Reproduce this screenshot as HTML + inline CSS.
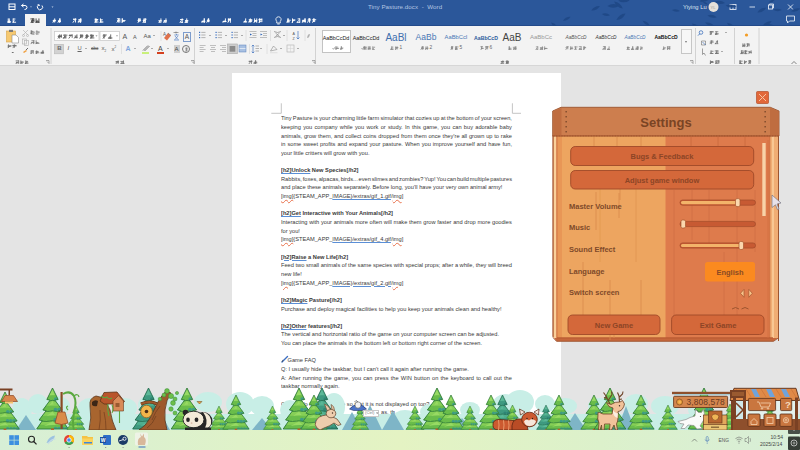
<!DOCTYPE html><html><head><meta charset="utf-8"><style>
*{margin:0;padding:0;box-sizing:border-box}
html,body{width:800px;height:450px;overflow:hidden}
body{position:relative;background:#e4e4e4;font-family:'Liberation Sans', sans-serif;}
.a{position:absolute}
.doc{position:absolute;left:281px;font-size:6.1px;color:#383838;white-space:nowrap;line-height:8.65px;transform:scaleX(0.93);transform-origin:0 0}
.j{width:231px;text-align:justify;text-align-last:justify;white-space:normal}
.b{font-weight:bold}
.w{text-decoration:underline wavy #e8704a;text-decoration-thickness:0.4px}
.u2{text-decoration:underline #5b8fd6}
.u{text-decoration:underline;text-decoration-color:#5b8fd6}
.btn{position:absolute;background:#d5693b;border:1px solid #a54d2b;border-radius:4px;color:#8b4a2a;font-weight:bold;font-size:7px;text-align:center}
.lab{position:absolute;left:569px;font-size:7.2px;color:#7d4a2a;font-weight:bold;white-space:nowrap}

</style></head><body>
<div class="a" style="left:0;top:0;width:800px;height:26px;background:#2b579a;border-bottom:1px solid #234a8a"></div>
<div class="a" style="left:25px;top:14px;width:21px;height:13px;background:#f3f3f3"></div>
<svg class="a" style="left:0;top:0" width="800" height="26" viewBox="0 0 800 26"><g fill="none" stroke="#fff" stroke-width="1"><rect x="9" y="4" width="6" height="5.5"/><line x1="9" y1="6.8" x2="15" y2="6.8"/><line x1="11" y1="9.5" x2="13" y2="9.5"/><path d="M21.5 5.5 L23.5 4 M21.5 5.5 L23.5 7 M21.5 5.5 H25 Q27 5.5 27 7.5 Q27 9.5 24.5 9.5"/><path d="M42 5.5 A2.6 2.6 0 1 1 38.5 5 M38 4 L38.5 5.3 L40 5.2"/></g><path d="M30 6.5 h2 l-1 1z M51.5 6.5 h2 l-1 1.2z" fill="#c9d6ea"/><circle cx="713.5" cy="7" r="5" fill="#e6e1da"/><text x="710.6" y="8.8" font-size="4" fill="#999" font-family="Liberation Sans">YL</text><g fill="none" stroke="#dfe6f2" stroke-width="0.9"><rect x="730" y="4.5" width="6" height="5"/><line x1="733" y1="4.5" x2="733" y2="9.5"/><line x1="749.5" y1="7" x2="755" y2="7"/><rect x="768.5" y="5" width="4" height="4"/><path d="M769.5 5 V4 H773.5 V8 H772.5"/><path d="M788 4.5 L793 9.5 M793 4.5 L788 9.5"/><path d="M786.5 16 H794.5 V21 H789.5 L787.5 23 V21 H786.5Z"/></g><g fill="#1f4886" opacity="0.9"><path transform="translate(601.9 14.1) rotate(8)" d="M0 0 q4.1 -2.5 8.2 0 q-4.1 2.5 -8.2 0z"/><path transform="translate(702.7 1.7) rotate(27)" d="M0 0 q3.0 -1.8 6.1 0 q-3.0 1.8 -6.1 0z"/><path transform="translate(607.4 6.1) rotate(-2)" d="M0 0 q6.0 -3.6 12.0 0 q-6.0 3.6 -12.0 0z"/><path transform="translate(757.5 12.4) rotate(-28)" d="M0 0 q4.9 -3.0 9.8 0 q-4.9 3.0 -9.8 0z"/><path transform="translate(705.1 22.6) rotate(19)" d="M0 0 q4.6 -2.7 9.1 0 q-4.6 2.7 -9.1 0z"/><path transform="translate(714.6 1.7) rotate(7)" d="M0 0 q5.3 -3.2 10.5 0 q-5.3 3.2 -10.5 0z"/><path transform="translate(618.3 0.8) rotate(-2)" d="M0 0 q5.6 -3.4 11.2 0 q-5.6 3.4 -11.2 0z"/><path transform="translate(726.9 22.8) rotate(34)" d="M0 0 q5.1 -3.1 10.3 0 q-5.1 3.1 -10.3 0z"/><path transform="translate(642.7 20.8) rotate(35)" d="M0 0 q4.3 -2.6 8.7 0 q-4.3 2.6 -8.7 0z"/><path transform="translate(768.5 2.5) rotate(-23)" d="M0 0 q3.4 -2.0 6.8 0 q-3.4 2.0 -6.8 0z"/><path transform="translate(791.0 11.3) rotate(-16)" d="M0 0 q4.9 -2.9 9.8 0 q-4.9 2.9 -9.8 0z"/><path transform="translate(671.9 10.0) rotate(7)" d="M0 0 q4.1 -2.4 8.1 0 q-4.1 2.4 -8.1 0z"/><path transform="translate(691.9 23.5) rotate(34)" d="M0 0 q5.0 -3.0 10.1 0 q-5.0 3.0 -10.1 0z"/><path transform="translate(762.7 25.8) rotate(-27)" d="M0 0 q5.0 -3.0 10.0 0 q-5.0 3.0 -10.0 0z"/><path transform="translate(763.8 25.1) rotate(6)" d="M0 0 q5.7 -3.4 11.4 0 q-5.7 3.4 -11.4 0z"/><path transform="translate(725.6 5.5) rotate(6)" d="M0 0 q5.5 -3.3 11.0 0 q-5.5 3.3 -11.0 0z"/><path transform="translate(614.1 1.6) rotate(39)" d="M0 0 q5.6 -3.3 11.1 0 q-5.6 3.3 -11.1 0z"/><path transform="translate(563.0 20.8) rotate(-28)" d="M0 0 q4.2 -2.5 8.5 0 q-4.2 2.5 -8.5 0z"/><path transform="translate(616.4 20.0) rotate(-36)" d="M0 0 q5.6 -3.4 11.2 0 q-5.6 3.4 -11.2 0z"/><path transform="translate(699.8 1.2) rotate(-14)" d="M0 0 q5.2 -3.1 10.3 0 q-5.2 3.1 -10.3 0z"/><path transform="translate(769.0 25.5) rotate(40)" d="M0 0 q4.5 -2.7 9.0 0 q-4.5 2.7 -9.0 0z"/><path transform="translate(620.5 2.0) rotate(-37)" d="M0 0 q4.8 -2.9 9.6 0 q-4.8 2.9 -9.6 0z"/><path transform="translate(591.3 10.6) rotate(-28)" d="M0 0 q4.8 -2.9 9.7 0 q-4.8 2.9 -9.7 0z"/><path transform="translate(551.0 22.6) rotate(37)" d="M0 0 q3.9 -2.4 7.9 0 q-3.9 2.4 -7.9 0z"/><path transform="translate(773.1 9.8) rotate(2)" d="M0 0 q4.4 -2.6 8.8 0 q-4.4 2.6 -8.8 0z"/><path transform="translate(707.4 15.5) rotate(10)" d="M0 0 q4.7 -2.8 9.4 0 q-4.7 2.8 -9.4 0z"/></g></svg>
<div class="a" style="left:368px;top:3px;font-size:6.2px;color:#b4c6e2;white-space:nowrap;letter-spacing:0.05px">Tiny Pasture.docx&nbsp;&nbsp;-&nbsp;&nbsp;Word</div>
<div class="a" style="left:683px;top:3.5px;font-size:5.8px;color:#dbe3f0;white-space:nowrap">Yiying Lu</div>
<svg style="position:absolute;left:7px;top:17.8px;opacity:1.00" width="10.00" height="5.2"><path d="M0.90 4.23H3.40M0.52 3.77H4.07M0.67 4.09H3.45M1.24 0.42V3.99M2.28 0.42V4.76M0.82 4.68L2.29 2.34M6.19 4.23H9.07M6.14 1.01H8.40M6.17 0.42V4.79M5.82 4.68L7.29 2.34" fill="none" stroke="#ffffff" stroke-width="0.94"/></svg>
<svg style="position:absolute;left:51.6px;top:17.8px;opacity:1.00" width="10.00" height="5.2"><path d="M1.08 2.31H4.06M1.26 2.82H3.47M0.64 2.86H3.46M2.69 0.42V4.54M0.82 4.68L2.29 2.34M5.94 3.26H8.74M5.97 2.91H8.72M6.28 3.67H8.65M7.57 0.42V4.81M8.17 0.42V4.20M5.82 4.68L7.29 2.34" fill="none" stroke="#ffffff" stroke-width="0.94"/></svg>
<svg style="position:absolute;left:72.4px;top:17.8px;opacity:1.00" width="10.60" height="5.2"><path d="M0.98 1.21H4.55M1.08 1.33H3.59M3.47 0.42V4.50M0.87 4.68L2.43 2.34M6.19 2.02H9.50M5.82 3.68H8.97M6.65 1.76H8.93M8.41 0.42V4.93M8.95 0.42V4.20M6.17 4.68L7.73 2.34" fill="none" stroke="#ffffff" stroke-width="0.94"/></svg>
<svg style="position:absolute;left:94px;top:17.8px;opacity:1.00" width="10.00" height="5.2"><path d="M0.84 4.01H4.53M1.17 2.07H3.96M0.76 1.57H4.27M2.18 0.42V4.81M1.27 0.42V4.37M0.82 4.68L2.29 2.34M6.43 4.00H9.43M5.92 1.79H8.79M6.61 4.00H8.53M6.47 0.42V4.58M5.82 4.68L7.29 2.34" fill="none" stroke="#ffffff" stroke-width="0.94"/></svg>
<svg style="position:absolute;left:115.6px;top:17.8px;opacity:1.00" width="10.00" height="5.2"><path d="M1.14 2.55H3.67M0.93 0.79H3.81M3.83 0.42V4.62M2.55 0.42V4.54M0.82 4.68L2.29 2.34M6.50 2.44H9.54M6.10 3.26H8.84M6.33 0.42V4.56M6.21 0.42V3.97M5.82 4.68L7.29 2.34" fill="none" stroke="#ffffff" stroke-width="0.94"/></svg>
<svg style="position:absolute;left:137px;top:17.8px;opacity:1.00" width="10.00" height="5.2"><path d="M0.54 2.38H4.10M1.11 1.15H4.02M2.83 0.42V3.97M1.64 0.42V4.29M0.82 4.68L2.29 2.34M6.16 4.26H8.94M6.01 1.20H9.57M5.79 2.53H8.52M8.21 0.42V4.40M8.06 0.42V4.44M5.82 4.68L7.29 2.34" fill="none" stroke="#ffffff" stroke-width="0.94"/></svg>
<svg style="position:absolute;left:158px;top:17.8px;opacity:1.00" width="9.50" height="5.2"><path d="M1.01 4.24H3.35M0.41 2.76H3.81M2.92 0.42V4.17M0.78 4.68L2.18 2.34M5.56 4.09H8.19M5.73 2.75H8.68M6.07 3.01H8.83M7.98 0.42V4.75M5.53 4.68L6.93 2.34" fill="none" stroke="#ffffff" stroke-width="0.94"/></svg>
<svg style="position:absolute;left:179px;top:17.8px;opacity:1.00" width="10.40" height="5.2"><path d="M1.06 1.51H4.43M1.45 4.38H4.09M3.19 0.42V4.89M0.85 4.68L2.38 2.34M6.56 3.72H9.13M5.72 4.33H8.81M6.06 2.49H9.31M7.74 0.42V4.58M6.05 4.68L7.58 2.34" fill="none" stroke="#ffffff" stroke-width="0.94"/></svg>
<svg style="position:absolute;left:200.7px;top:17.8px;opacity:1.00" width="9.70" height="5.2"><path d="M0.53 3.82H3.71M0.63 3.37H4.33M3.25 0.42V4.25M3.28 0.42V4.91M0.80 4.68L2.22 2.34M6.15 2.47H8.19M6.45 1.36H8.12M5.81 2.93H8.89M7.72 0.42V4.26M7.41 0.42V4.04M5.65 4.68L7.07 2.34" fill="none" stroke="#ffffff" stroke-width="0.94"/></svg>
<svg style="position:absolute;left:221.6px;top:17.8px;opacity:1.00" width="9.90" height="5.2"><path d="M1.30 3.69H3.43M0.57 3.51H4.54M3.42 0.42V4.12M0.81 4.68L2.27 2.34M5.97 1.55H9.21M6.03 1.97H9.30M6.27 1.00H9.38M8.38 0.42V4.81M6.35 0.42V4.06M5.76 4.68L7.22 2.34" fill="none" stroke="#ffffff" stroke-width="0.94"/></svg>
<svg style="position:absolute;left:243px;top:17.8px;opacity:1.00" width="20.00" height="5.2"><path d="M1.38 3.96H4.11M0.59 3.60H3.52M2.67 0.42V4.24M0.82 4.68L2.29 2.34M5.53 3.63H9.05M5.75 1.68H9.31M6.11 2.63H9.30M7.33 0.42V4.54M5.82 4.68L7.29 2.34M10.97 3.30H14.01M11.59 2.52H14.22M13.74 0.42V4.83M11.63 0.42V4.37M10.82 4.68L12.29 2.34M15.96 1.22H18.43M15.49 1.66H19.18M16.53 3.63H18.53M16.45 0.42V4.82M18.87 0.42V4.13M15.82 4.68L17.29 2.34" fill="none" stroke="#ffffff" stroke-width="0.94"/></svg>
<svg style="position:absolute;left:286px;top:17.8px;opacity:1.00" width="30.70" height="5.2"><path d="M1.04 2.23H4.69M0.62 3.81H3.97M2.07 0.42V4.10M2.01 0.42V4.65M0.84 4.68L2.34 2.34M6.12 2.01H9.44M6.19 2.18H8.92M6.51 0.42V4.86M5.96 4.68L7.46 2.34M10.78 4.32H13.99M11.65 0.92H14.00M13.75 0.42V4.78M11.07 4.68L12.58 2.34M16.45 2.26H19.43M16.18 2.58H19.13M16.00 3.69H19.92M19.23 0.42V4.56M18.82 0.42V3.99M16.19 4.68L17.69 2.34M21.99 1.02H24.47M21.59 2.01H25.08M23.39 0.42V3.94M23.66 0.42V4.88M21.31 4.68L22.81 2.34M26.23 1.73H30.20M26.68 3.07H29.27M28.14 0.42V4.09M27.68 0.42V3.92M26.42 4.68L27.93 2.34" fill="none" stroke="#ffffff" stroke-width="0.94"/></svg>
<svg style="position:absolute;left:30px;top:17.8px;opacity:1.00" width="10.00" height="5.2"><path d="M0.42 0.91H3.98M1.05 4.34H3.65M1.23 2.41H4.16M2.63 0.42V4.82M3.88 0.42V4.22M0.82 4.68L2.29 2.34M5.83 4.36H9.39M6.20 3.35H8.85M8.92 0.42V4.77M6.07 0.42V4.55M5.82 4.68L7.29 2.34" fill="none" stroke="#444" stroke-width="0.94"/></svg>
<svg class="a" style="left:275px;top:16px" width="7" height="9"><path d="M3.5 0.8 A2.6 2.6 0 0 1 5.3 5.3 V7 H1.7 V5.3 A2.6 2.6 0 0 1 3.5 0.8z M2.3 8 H4.7" fill="none" stroke="#fff" stroke-width="0.8"/></svg>
<div class="a" style="left:0;top:26px;width:800px;height:40px;background:#f3f3f3;border-bottom:1px solid #d6d6d6"></div>
<svg class="a" style="left:0;top:26px" width="800" height="41" viewBox="0 26 800 41"><line x1="51" y1="28" x2="51" y2="64" stroke="#d2d2d2" stroke-width="1"/><line x1="194.5" y1="28" x2="194.5" y2="64" stroke="#d2d2d2" stroke-width="1"/><line x1="315.5" y1="28" x2="315.5" y2="64" stroke="#d2d2d2" stroke-width="1"/><line x1="695.5" y1="28" x2="695.5" y2="64" stroke="#d2d2d2" stroke-width="1"/><line x1="734.5" y1="28" x2="734.5" y2="64" stroke="#d2d2d2" stroke-width="1"/><line x1="759" y1="28" x2="759" y2="64" stroke="#d2d2d2" stroke-width="1"/><line x1="121.5" y1="44" x2="121.5" y2="54" stroke="#dadada" stroke-width="0.8"/><line x1="161" y1="31" x2="161" y2="41" stroke="#dadada" stroke-width="0.8"/><line x1="246" y1="30" x2="246" y2="41" stroke="#dadada" stroke-width="0.8"/><line x1="270.5" y1="30" x2="270.5" y2="41" stroke="#dadada" stroke-width="0.8"/><line x1="287" y1="30" x2="287" y2="41" stroke="#dadada" stroke-width="0.8"/><line x1="305" y1="30" x2="305" y2="41" stroke="#dadada" stroke-width="0.8"/><line x1="249.5" y1="44" x2="249.5" y2="54" stroke="#dadada" stroke-width="0.8"/><line x1="267" y1="44" x2="267" y2="54" stroke="#dadada" stroke-width="0.8"/><path d="M46 60.5 h3 v3 M47 61.5 l2 2" fill="none" stroke="#777" stroke-width="0.6"/><path d="M191 60.5 h3 v3 M192 61.5 l2 2" fill="none" stroke="#777" stroke-width="0.6"/><path d="M312 60.5 h3 v3 M313 61.5 l2 2" fill="none" stroke="#777" stroke-width="0.6"/><path d="M690 60.5 h3 v3 M691 61.5 l2 2" fill="none" stroke="#777" stroke-width="0.6"/><rect x="6.5" y="31" width="9" height="11" fill="#f6c971" stroke="#d9a54a" stroke-width="0.6"/><rect x="9" y="29.8" width="4" height="2.2" fill="#7a7a7a"/><path d="M12 35 h4 l2.5 2.5 v5.5 h-6.5z" fill="#fff" stroke="#8a8a8a" stroke-width="0.6"/><path d="M11.5 52 h2 l-1 1z" fill="#555"/><g fill="none" stroke="#b5b5b5" stroke-width="0.7"><path d="M23 30 L28 35 M28 30 L23 35"/><circle cx="23.5" cy="35.5" r="1"/><circle cx="27.5" cy="35.5" r="1"/><rect x="22.5" y="39" width="4" height="5"/><rect x="24.5" y="40.5" width="4" height="5"/></g><path d="M23 52 l3 -2 l1 1 l-3 2z" fill="#f0a040"/><path d="M26 50 l2 -2" stroke="#444" stroke-width="0.8"/><rect x="54.5" y="31.5" width="44.5" height="9" fill="#fff" stroke="#c6c6c6" stroke-width="0.7"/><rect x="100" y="31.5" width="19.5" height="9" fill="#fff" stroke="#c6c6c6" stroke-width="0.7"/><path d="M95.5 35.5 h2 l-1 1z M116 35.5 h2 l-1 1z" fill="#666"/><rect x="54.5" y="44.3" width="9" height="9.5" fill="#d2d2d2" stroke="#b8b8b8" stroke-width="0.6"/></svg>
<svg style="position:absolute;left:7px;top:44px;opacity:0.73" width="10.00" height="4.5"><path d="M0.47 2.03H4.18M1.04 1.87H4.56M1.27 2.56H3.40M1.49 0.36V3.78M0.82 4.05L2.29 2.02M5.81 1.82H9.58M5.44 1.69H9.45M5.63 1.36H8.76M7.43 0.36V3.83M5.82 4.05L7.29 2.02" fill="none" stroke="#444" stroke-width="0.81"/></svg>
<svg style="position:absolute;left:30px;top:30px;opacity:0.73" width="10.00" height="4.5"><path d="M1.38 1.46H3.45M0.58 3.25H4.08M1.10 0.36V3.65M1.71 0.36V3.90M0.82 4.05L2.29 2.02M6.30 2.75H9.45M5.81 1.90H9.58M6.87 0.36V3.93M5.82 4.05L7.29 2.02" fill="none" stroke="#444" stroke-width="0.81"/></svg>
<svg style="position:absolute;left:30px;top:40px;opacity:0.73" width="10.00" height="4.5"><path d="M1.45 0.81H4.46M1.32 2.65H4.36M3.71 0.36V4.05M0.82 4.05L2.29 2.02M6.14 3.28H9.46M6.27 2.83H8.63M6.15 0.36V3.95M5.82 4.05L7.29 2.02" fill="none" stroke="#444" stroke-width="0.81"/></svg>
<svg style="position:absolute;left:30px;top:49.5px;opacity:0.73" width="15.00" height="4.5"><path d="M0.97 1.86H3.40M1.07 0.73H3.65M1.04 0.36V4.09M3.23 0.36V3.83M0.82 4.05L2.29 2.02M5.48 2.75H9.27M5.49 1.47H8.67M6.71 0.36V3.96M5.82 4.05L7.29 2.02M10.88 2.23H13.94M11.37 2.83H14.12M10.50 2.70H13.53M12.95 0.36V4.00M12.86 0.36V3.50M10.82 4.05L12.29 2.02" fill="none" stroke="#444" stroke-width="0.81"/></svg>
<svg style="position:absolute;left:15px;top:59.5px;opacity:0.73" width="14.00" height="4.5"><path d="M0.69 0.87H3.91M1.17 2.86H3.46M0.92 2.30H3.67M3.69 0.36V3.87M0.77 4.05L2.14 2.02M6.14 3.76H7.80M6.00 2.12H8.92M5.36 2.09H8.03M5.83 0.36V3.46M5.43 4.05L6.80 2.02M9.86 3.68H13.42M10.75 2.28H13.28M10.76 1.40H13.02M10.73 0.36V4.23M10.10 4.05L11.47 2.02" fill="none" stroke="#444" stroke-width="0.81"/></svg>
<svg style="position:absolute;left:115px;top:59.5px;opacity:0.73" width="10.00" height="4.5"><path d="M1.32 1.95H3.86M0.55 1.86H3.76M0.83 1.70H3.84M3.13 0.36V4.19M0.82 4.05L2.29 2.02M5.48 1.47H8.83M5.50 3.42H9.51M6.48 3.06H8.69M8.48 0.36V3.63M5.82 4.05L7.29 2.02" fill="none" stroke="#444" stroke-width="0.81"/></svg>
<svg style="position:absolute;left:248px;top:59.5px;opacity:0.73" width="10.00" height="4.5"><path d="M0.73 1.46H3.98M0.87 1.27H4.54M3.42 0.36V3.94M0.82 4.05L2.29 2.02M5.46 2.94H9.26M6.35 2.10H9.15M7.46 0.36V4.20M7.65 0.36V3.53M5.82 4.05L7.29 2.02" fill="none" stroke="#444" stroke-width="0.81"/></svg>
<svg style="position:absolute;left:500px;top:59.5px;opacity:0.73" width="10.00" height="4.5"><path d="M0.78 1.76H4.27M0.73 3.75H4.17M1.10 1.62H3.84M2.92 0.36V3.44M0.82 4.05L2.29 2.02M5.97 2.41H8.76M5.94 3.07H9.03M5.62 1.44H9.04M6.73 0.36V3.61M7.70 0.36V4.17M5.82 4.05L7.29 2.02" fill="none" stroke="#444" stroke-width="0.81"/></svg>
<svg style="position:absolute;left:709px;top:59.5px;opacity:0.73" width="11.00" height="4.5"><path d="M1.47 1.88H3.97M1.48 1.53H4.36M0.94 2.48H4.63M1.43 0.36V4.18M0.90 4.05L2.52 2.02M6.56 1.93H10.50M7.15 3.35H9.20M6.92 0.78H10.42M9.76 0.36V3.82M6.87 0.36V4.21M6.40 4.05L8.02 2.02" fill="none" stroke="#444" stroke-width="0.81"/></svg>
<svg style="position:absolute;left:739px;top:59.5px;opacity:0.73" width="13.00" height="4.5"><path d="M0.62 3.74H3.01M0.92 1.16H3.64M1.13 3.64H3.60M1.11 0.36V4.07M0.90 0.36V3.49M0.71 4.05L1.98 2.02M5.01 2.71H7.37M5.37 1.47H7.99M5.48 0.36V3.65M5.04 4.05L6.32 2.02M9.26 1.90H12.22M9.34 0.71H12.06M11.20 0.36V4.17M10.77 0.36V3.59M9.38 4.05L10.65 2.02" fill="none" stroke="#444" stroke-width="0.81"/></svg>
<svg style="position:absolute;left:708.5px;top:30.5px;opacity:0.73" width="10.50" height="4.5"><path d="M0.96 0.77H4.37M0.68 0.85H4.68M1.33 0.36V3.58M2.39 0.36V3.71M0.86 4.05L2.40 2.02M6.12 0.78H9.31M5.93 2.83H9.81M6.34 3.00H9.03M7.29 0.36V4.11M6.11 4.05L7.65 2.02" fill="none" stroke="#444" stroke-width="0.81"/></svg>
<svg style="position:absolute;left:708.5px;top:40px;opacity:0.73" width="10.50" height="4.5"><path d="M0.77 2.14H4.68M1.25 1.02H4.31M2.58 0.36V4.19M0.86 4.05L2.40 2.02M5.86 3.66H9.28M6.96 1.35H8.94M8.52 0.36V3.54M6.11 4.05L7.65 2.02" fill="none" stroke="#444" stroke-width="0.81"/></svg>
<svg style="position:absolute;left:708.5px;top:49.5px;opacity:0.73" width="10.50" height="4.5"><path d="M1.59 3.50H4.48M1.65 3.82H3.94M1.66 1.26H4.49M2.04 0.36V4.03M0.86 4.05L2.40 2.02M6.26 3.78H8.90M5.78 0.92H9.31M6.41 3.46H9.76M7.43 0.36V4.11M8.87 0.36V3.76M6.11 4.05L7.65 2.02" fill="none" stroke="#444" stroke-width="0.81"/></svg>
<svg style="position:absolute;left:742px;top:43px;opacity:0.73" width="8.00" height="4.5"><path d="M0.52 2.90H3.22M0.65 2.08H3.42M0.90 0.36V3.74M2.73 0.36V4.07M0.66 4.05L1.83 2.02M4.79 1.86H7.48M4.52 0.87H6.74M5.68 0.36V3.68M7.07 0.36V3.41M4.66 4.05L5.83 2.02" fill="none" stroke="#444" stroke-width="0.81"/></svg>
<svg style="position:absolute;left:740px;top:50px;opacity:0.73" width="12.00" height="4.5"><path d="M0.62 3.59H3.40M1.13 2.55H3.63M1.15 0.88H2.78M3.07 0.36V3.72M1.41 0.36V3.76M0.66 4.05L1.83 2.02M4.82 1.09H6.68M4.63 3.61H7.37M4.56 1.15H7.54M5.68 0.36V4.08M5.01 0.36V3.55M4.66 4.05L5.83 2.02M8.39 1.45H10.71M8.65 2.42H11.66M11.15 0.36V3.61M8.66 4.05L9.83 2.02" fill="none" stroke="#444" stroke-width="0.81"/></svg>
<svg style="position:absolute;left:31px;top:30.5px;opacity:1.00" width="9.00" height="4.5"><path d="M0.84 1.33H4.13M0.56 3.74H3.16M2.57 0.36V3.98M2.91 0.36V4.14M0.74 4.05L2.06 2.02M5.19 3.13H7.82M5.15 1.52H7.80M6.08 0.36V3.60M5.83 0.36V4.17M5.24 4.05L6.56 2.02" fill="none" stroke="#aaa" stroke-width="0.81"/></svg>
<svg style="position:absolute;left:57px;top:33.5px;opacity:0.79" width="38.00" height="5"><path d="M0.98 1.89H4.98M0.75 2.53H4.73M4.28 0.40V3.85M2.63 0.40V4.57M0.89 4.50L2.49 2.25M5.92 3.95H9.46M6.12 1.17H10.39M7.14 2.79H9.56M7.98 0.40V4.01M6.32 4.50L7.91 2.25M12.11 1.12H15.33M11.80 1.51H14.68M15.17 0.40V3.79M11.75 4.50L13.34 2.25M17.84 3.60H20.47M17.57 2.05H20.02M19.94 0.40V4.30M17.18 4.50L18.77 2.25M23.24 2.18H26.25M22.88 1.29H26.23M25.05 0.40V4.16M23.74 0.40V4.06M22.60 4.50L24.20 2.25M28.35 1.84H31.26M28.76 2.21H32.13M30.32 0.40V4.14M29.55 0.40V4.69M28.03 4.50L29.63 2.25M33.59 3.91H37.32M34.21 2.17H36.83M33.03 1.32H36.95M33.97 0.40V4.37M34.87 0.40V4.25M33.46 4.50L35.06 2.25" fill="none" stroke="#333" stroke-width="0.90"/></svg>
<svg style="position:absolute;left:102px;top:33.5px;opacity:0.79" width="11.00" height="5"><path d="M0.66 1.97H3.91M0.97 0.98H4.72M2.11 0.40V4.59M0.90 4.50L2.52 2.25M6.61 4.16H9.25M6.48 3.99H10.43M8.70 0.40V4.61M6.40 4.50L8.02 2.25" fill="none" stroke="#333" stroke-width="0.90"/></svg>
<div class="a" style="left:57.3px;top:45px;font-size:6px;color:#666;white-space:nowrap;font-weight:bold">B</div>
<div class="a" style="left:67.5px;top:45px;font-size:6px;color:#555;white-space:nowrap;"><i>I</i></div>
<div class="a" style="left:77.5px;top:44.8px;font-size:5.8px;color:#666;white-space:nowrap;"><u>U</u></div>
<div class="a" style="left:91px;top:46px;font-size:4.6px;color:#666;white-space:nowrap;text-decoration:line-through">abc</div>
<div class="a" style="left:101.5px;top:45px;font-size:6px;color:#555;white-space:nowrap;">x<sub style="font-size:3px">2</sub></div>
<div class="a" style="left:111.5px;top:45px;font-size:6px;color:#555;white-space:nowrap;">x<sup style="font-size:3px">2</sup></div>
<div class="a" style="left:122.5px;top:32.5px;font-size:7px;color:#555;white-space:nowrap;">A</div>
<div class="a" style="left:133px;top:33.5px;font-size:5.5px;color:#555;white-space:nowrap;">A</div>
<div class="a" style="left:143.5px;top:33px;font-size:6px;color:#555;white-space:nowrap;">Aa</div>
<div class="a" style="left:125.5px;top:45px;font-size:7px;color:#7fa6dd;white-space:nowrap;font-weight:bold">A</div>
<div class="a" style="left:158px;top:44.5px;font-size:7px;color:#444;white-space:nowrap;">A</div>
<div class="a" style="left:157px;top:51.5px;width:7px;height:2px;background:#d4401e"></div>
<div class="a" style="left:142px;top:51.5px;width:7px;height:2px;background:#c9f07a"></div>
<svg class="a" style="left:142px;top:44px" width="8" height="8"><path d="M1 6.5 l5 -5 M2.5 7 l5 -5" stroke="#555" stroke-width="0.8"/></svg>
<div class="a" style="left:173.5px;top:44.5px;font-size:6px;color:#444;white-space:nowrap;background:#cfcfcf;padding:0 1px;line-height:8px">A</div>
<div class="a" style="left:181.5px;top:44.5px;width:8px;height:8px;border:0.7px solid #777;border-radius:50%"><svg width="8" height="8" style="position:absolute;left:0;top:0"><path d="M2 2.2 h3 M3.5 1.5 v3.5 M2 4 h3 M3.5 5 l-1 1" fill="none" stroke="#555" stroke-width="0.5"/></svg></div>
<div class="a" style="left:182.5px;top:31.5px;font-size:6.5px;color:#555;white-space:nowrap;border:0.7px solid #7d9ccc;padding:0 1.2px;line-height:8px">A</div>
<svg class="a" style="left:162px;top:30px" width="20" height="12"><path d="M2 8 l4 -5 l3 2.5 l-4 5z" fill="#e0704a"/><path d="M6 3 l3 2.5" stroke="#666" stroke-width="0.6"/><text x="1" y="6" font-size="4.5" fill="#555" font-family="Liberation Sans">A</text><path d="M11.5 2.5 h5 M14 1.5 v2" stroke="#666" stroke-width="0.6"/><path d="M12.3 5 h4.4 M14.5 4 v1 M13 6 l3 3.5 M16 6 l-3 3.5" fill="none" stroke="#3a6fc0" stroke-width="0.6"/><path d="M12 10 h5" stroke="#3a6fc0" stroke-width="0.6"/></svg>
<div class="a" style="left:11.5px;top:52.0px;width:0;height:0;border-left:1px solid transparent;border-right:1px solid transparent;border-top:1.2px solid #666"></div>
<div class="a" style="left:85px;top:47.5px;width:0;height:0;border-left:1px solid transparent;border-right:1px solid transparent;border-top:1.2px solid #666"></div>
<div class="a" style="left:133.5px;top:47.5px;width:0;height:0;border-left:1px solid transparent;border-right:1px solid transparent;border-top:1.2px solid #666"></div>
<div class="a" style="left:150.5px;top:47.5px;width:0;height:0;border-left:1px solid transparent;border-right:1px solid transparent;border-top:1.2px solid #666"></div>
<div class="a" style="left:167px;top:47.5px;width:0;height:0;border-left:1px solid transparent;border-right:1px solid transparent;border-top:1.2px solid #666"></div>
<div class="a" style="left:153px;top:35.0px;width:0;height:0;border-left:1px solid transparent;border-right:1px solid transparent;border-top:1.2px solid #666"></div>
<div class="a" style="left:208.5px;top:35.0px;width:0;height:0;border-left:1px solid transparent;border-right:1px solid transparent;border-top:1.2px solid #666"></div>
<div class="a" style="left:225px;top:35.0px;width:0;height:0;border-left:1px solid transparent;border-right:1px solid transparent;border-top:1.2px solid #666"></div>
<div class="a" style="left:241px;top:35.0px;width:0;height:0;border-left:1px solid transparent;border-right:1px solid transparent;border-top:1.2px solid #666"></div>
<div class="a" style="left:283px;top:35.0px;width:0;height:0;border-left:1px solid transparent;border-right:1px solid transparent;border-top:1.2px solid #666"></div>
<div class="a" style="left:260px;top:47.5px;width:0;height:0;border-left:1px solid transparent;border-right:1px solid transparent;border-top:1.2px solid #666"></div>
<div class="a" style="left:280px;top:47.5px;width:0;height:0;border-left:1px solid transparent;border-right:1px solid transparent;border-top:1.2px solid #666"></div>
<div class="a" style="left:297px;top:47.5px;width:0;height:0;border-left:1px solid transparent;border-right:1px solid transparent;border-top:1.2px solid #666"></div>
<div class="a" style="left:725px;top:32.0px;width:0;height:0;border-left:1px solid transparent;border-right:1px solid transparent;border-top:1.2px solid #666"></div>
<div class="a" style="left:720.5px;top:51.0px;width:0;height:0;border-left:1px solid transparent;border-right:1px solid transparent;border-top:1.2px solid #666"></div>
<svg class="a" style="left:194px;top:26px" width="125" height="41" viewBox="194 26 125 41"><rect x="199" y="31.8" width="1.2" height="1.2" fill="#3a6fc0"/><line x1="201.3" y1="32.4" x2="205.5" y2="32.4" stroke="#888" stroke-width="0.6"/><rect x="199" y="34.4" width="1.2" height="1.2" fill="#3a6fc0"/><line x1="201.3" y1="35.0" x2="205.5" y2="35.0" stroke="#888" stroke-width="0.6"/><rect x="199" y="37.0" width="1.2" height="1.2" fill="#3a6fc0"/><line x1="201.3" y1="37.6" x2="205.5" y2="37.6" stroke="#888" stroke-width="0.6"/><rect x="215.5" y="31.8" width="1.2" height="1.2" fill="#3a6fc0"/><line x1="217.8" y1="32.4" x2="222.0" y2="32.4" stroke="#888" stroke-width="0.6"/><rect x="215.5" y="34.4" width="1.2" height="1.2" fill="#3a6fc0"/><line x1="217.8" y1="35.0" x2="222.0" y2="35.0" stroke="#888" stroke-width="0.6"/><rect x="215.5" y="37.0" width="1.2" height="1.2" fill="#3a6fc0"/><line x1="217.8" y1="37.6" x2="222.0" y2="37.6" stroke="#888" stroke-width="0.6"/><rect x="231.5" y="31.8" width="1.2" height="1.2" fill="#3a6fc0"/><line x1="233.8" y1="32.4" x2="238.0" y2="32.4" stroke="#888" stroke-width="0.6"/><rect x="231.5" y="34.4" width="1.2" height="1.2" fill="#3a6fc0"/><line x1="233.8" y1="35.0" x2="238.0" y2="35.0" stroke="#888" stroke-width="0.6"/><rect x="231.5" y="37.0" width="1.2" height="1.2" fill="#3a6fc0"/><line x1="233.8" y1="37.6" x2="238.0" y2="37.6" stroke="#888" stroke-width="0.6"/><path d="M249.5 31.5 h7 M252.5 33.5 h4 M252.5 35.5 h4 M249.5 37.5 h7" stroke="#999" stroke-width="0.6"/><path d="M250.0 33.5 l2 1 l-2 1z" fill="#2a63b8"/><path d="M260 31.5 h7 M263 33.5 h4 M263 35.5 h4 M260 37.5 h7" stroke="#999" stroke-width="0.6"/><path d="M260.5 33.5 l2 1 l-2 1z" fill="#2a63b8"/><path d="M274 31.5 q3.5 2 7 0 M274 37.5 q3.5 -2 7 0 M275.5 33 l4 3.5 M279.5 33 l-4 3.5" fill="none" stroke="#777" stroke-width="0.6"/><text x="292.5" y="35" font-size="3.6" fill="#555" font-family="Liberation Sans">A</text><text x="292.5" y="39.5" font-size="3.6" fill="#555" font-family="Liberation Sans">Z</text><path d="M298 31 v8 M296.5 37.5 l1.5 1.5 l1.5 -1.5" fill="none" stroke="#2a63b8" stroke-width="0.6"/><path d="M307.5 36.5 l2 -2.5 M307.5 38 l2 -2.5" stroke="#666" stroke-width="0.6"/><line x1="199.6" y1="45.5" x2="205.6" y2="45.5" stroke="#9a9a9a" stroke-width="0.6"/><line x1="199.6" y1="47.5" x2="203.6" y2="47.5" stroke="#9a9a9a" stroke-width="0.6"/><line x1="199.6" y1="49.5" x2="205.6" y2="49.5" stroke="#9a9a9a" stroke-width="0.6"/><line x1="199.6" y1="51.5" x2="203.6" y2="51.5" stroke="#9a9a9a" stroke-width="0.6"/><line x1="210.0" y1="45.5" x2="216.0" y2="45.5" stroke="#9a9a9a" stroke-width="0.6"/><line x1="211.0" y1="47.5" x2="215.0" y2="47.5" stroke="#9a9a9a" stroke-width="0.6"/><line x1="210.0" y1="49.5" x2="216.0" y2="49.5" stroke="#9a9a9a" stroke-width="0.6"/><line x1="211.0" y1="51.5" x2="215.0" y2="51.5" stroke="#9a9a9a" stroke-width="0.6"/><line x1="220" y1="45.5" x2="226" y2="45.5" stroke="#9a9a9a" stroke-width="0.6"/><line x1="222" y1="47.5" x2="226" y2="47.5" stroke="#9a9a9a" stroke-width="0.6"/><line x1="220" y1="49.5" x2="226" y2="49.5" stroke="#9a9a9a" stroke-width="0.6"/><line x1="222" y1="51.5" x2="226" y2="51.5" stroke="#9a9a9a" stroke-width="0.6"/><rect x="227.6" y="44" width="9.7" height="9.7" fill="#cdcdcd" stroke="#aaa" stroke-width="0.6"/><rect x="229.6" y="46" width="5.7" height="5.7" fill="#8a8a8a"/><rect x="239" y="45" width="7" height="7" fill="#a8c0e2" stroke="#5a80ba" stroke-width="0.5"/><path d="M239.5 48.5 h6" stroke="#fff" stroke-width="0.6"/><path d="M253 45 v8 M251.7 46.3 l1.3 -1.3 l1.3 1.3 M251.7 51.7 l1.3 1.3 l1.3 -1.3" stroke="#2a63b8" stroke-width="0.6" fill="none"/><path d="M255.5 46 h3.5 M255.5 48.5 h3.5 M255.5 51 h3.5" stroke="#888" stroke-width="0.6"/><path d="M270.5 51 l3 -5 l3.5 3.5 z" fill="none" stroke="#888" stroke-width="0.6"/><rect x="270" y="52" width="7.5" height="1.3" fill="#e3e3e3"/><rect x="287" y="45" width="7" height="7" fill="none" stroke="#b0b0b0" stroke-width="0.6"/><path d="M290.5 45 v7 M287 48.5 h7" stroke="#d0d0d0" stroke-width="0.5"/></svg>
<div class="a" style="left:322px;top:29.5px;width:28.5px;height:23.5px;border:1.8px solid #c3c3c3;background:#fff"></div>
<div class="a" style="left:681px;top:29px;width:10.5px;height:25px;border:0.8px solid #c6c6c6;background:#f7f7f7"></div>
<div class="a" style="left:684.5px;top:40.5px;width:0;height:0;border-left:1.5px solid transparent;border-right:1.5px solid transparent;border-top:2px solid #777"></div>
<div class="a" style="left:316px;width:40px;text-align:center;top:34.652px;font-size:5.4px;line-height:6.21px;color:#222;white-space:nowrap;">AaBbCcDd</div>
<div class="a" style="left:346px;width:40px;text-align:center;top:34.652px;font-size:5.4px;line-height:6.21px;color:#222;white-space:nowrap;">AaBbCcDd</div>
<div class="a" style="left:376px;width:40px;text-align:center;top:31.8px;font-size:10px;line-height:11.5px;color:#3f6fae;white-space:nowrap;font-weight:normal">AaBl</div>
<div class="a" style="left:406px;width:40px;text-align:center;top:32.730000000000004px;font-size:8.5px;line-height:9.774999999999999px;color:#4a78b5;white-space:nowrap;">AaBb</div>
<div class="a" style="left:436px;width:40px;text-align:center;top:34.403999999999996px;font-size:5.8px;line-height:6.669999999999999px;color:#4a78b5;white-space:nowrap;">AaBbCcI</div>
<div class="a" style="left:466px;width:40px;text-align:center;top:34.775999999999996px;font-size:5.2px;line-height:5.9799999999999995px;color:#2d5c9c;white-space:nowrap;font-weight:bold">AaBbCcD</div>
<div class="a" style="left:492px;width:40px;text-align:center;top:31.8px;font-size:10px;line-height:11.5px;color:#444;white-space:nowrap;">AaB</div>
<div class="a" style="left:521px;width:40px;text-align:center;top:34.28px;font-size:6px;line-height:6.8999999999999995px;color:#999;white-space:nowrap;">AaBbCc</div>
<div class="a" style="left:556px;width:40px;text-align:center;top:35.024px;font-size:4.8px;line-height:5.52px;color:#555;white-space:nowrap;font-style:italic">AaBbCcD</div>
<div class="a" style="left:586px;width:40px;text-align:center;top:35.024px;font-size:4.8px;line-height:5.52px;color:#333;white-space:nowrap;font-style:italic">AaBbCcD</div>
<div class="a" style="left:615px;width:40px;text-align:center;top:35.024px;font-size:4.8px;line-height:5.52px;color:#4a78b5;white-space:nowrap;font-style:italic">AaBbCcD</div>
<div class="a" style="left:646px;width:40px;text-align:center;top:34.9px;font-size:5px;line-height:5.75px;color:#111;white-space:nowrap;font-weight:bold">AaBbCcD</div>
<svg style="position:absolute;left:334.5px;top:45.8px;opacity:0.67" width="9.00" height="4.3"><path d="M0.58 2.50H3.54M0.41 2.35H4.07M0.77 1.12H3.18M1.04 0.34V3.71M0.74 3.87L2.06 1.94M5.23 2.66H7.95M5.82 2.02H8.39M6.24 0.34V3.44M6.46 0.34V3.54M5.24 3.87L6.56 1.94" fill="none" stroke="#555" stroke-width="0.77"/></svg>
<svg style="position:absolute;left:362.5px;top:45.8px;opacity:0.67" width="13.00" height="4.3"><path d="M0.35 1.18H3.97M0.83 2.05H3.57M1.26 3.11H3.78M1.17 0.34V3.34M1.99 0.34V3.30M0.71 3.87L1.98 1.94M5.40 2.16H7.27M5.69 1.04H7.57M4.77 2.81H8.05M6.89 0.34V3.90M5.29 0.34V3.28M5.04 3.87L6.32 1.94M10.09 1.23H12.10M10.01 3.52H11.74M9.73 0.34V3.53M9.38 3.87L10.65 1.94" fill="none" stroke="#555" stroke-width="0.77"/></svg>
<svg style="position:absolute;left:389.5px;top:45.8px;opacity:0.67" width="9.00" height="4.3"><path d="M1.38 1.12H3.32M0.52 3.10H3.58M0.60 3.41H3.30M1.77 0.34V3.26M0.74 3.87L2.06 1.94M5.58 1.86H7.82M5.29 1.63H8.40M5.73 0.34V3.68M7.11 0.34V3.53M5.24 3.87L6.56 1.94" fill="none" stroke="#555" stroke-width="0.77"/></svg>
<svg style="position:absolute;left:419.5px;top:45.8px;opacity:0.67" width="9.00" height="4.3"><path d="M1.02 2.32H4.01M1.49 0.96H3.72M1.26 1.83H3.31M2.45 0.34V3.53M2.95 0.34V3.61M0.74 3.87L2.06 1.94M5.95 2.50H7.84M5.21 2.20H8.60M7.37 0.34V3.87M6.01 0.34V3.48M5.24 3.87L6.56 1.94" fill="none" stroke="#555" stroke-width="0.77"/></svg>
<svg style="position:absolute;left:449.5px;top:45.8px;opacity:0.67" width="9.00" height="4.3"><path d="M0.77 1.90H3.06M1.05 2.12H3.06M1.00 0.81H3.35M2.34 0.34V3.58M1.72 0.34V3.34M0.74 3.87L2.06 1.94M5.40 2.52H7.66M5.14 3.46H7.68M5.58 0.93H8.49M6.49 0.34V3.45M5.46 0.34V3.78M5.24 3.87L6.56 1.94" fill="none" stroke="#555" stroke-width="0.77"/></svg>
<svg style="position:absolute;left:479.5px;top:45.8px;opacity:0.67" width="9.00" height="4.3"><path d="M1.02 2.44H3.69M0.92 2.20H3.19M0.43 0.65H3.03M1.56 0.34V3.28M0.74 3.87L2.06 1.94M5.48 0.68H8.57M5.09 1.07H8.20M7.58 0.34V3.38M6.25 0.34V3.48M5.24 3.87L6.56 1.94" fill="none" stroke="#555" stroke-width="0.77"/></svg>
<svg style="position:absolute;left:507.5px;top:45.8px;opacity:0.67" width="9.00" height="4.3"><path d="M1.18 3.64H3.55M0.79 2.27H3.50M1.14 0.34V3.79M1.39 0.34V4.08M0.74 3.87L2.06 1.94M4.90 1.34H7.89M5.65 2.90H8.46M5.16 2.79H8.13M7.24 0.34V4.01M8.00 0.34V3.48M5.24 3.87L6.56 1.94" fill="none" stroke="#555" stroke-width="0.77"/></svg>
<svg style="position:absolute;left:534.5px;top:45.8px;opacity:0.67" width="13.00" height="4.3"><path d="M0.90 0.90H3.08M1.27 3.37H3.12M2.79 0.34V3.51M0.71 3.87L1.98 1.94M4.94 1.63H8.22M5.44 2.54H7.95M5.19 3.59H8.14M7.41 0.34V3.60M5.04 3.87L6.32 1.94M9.35 2.36H11.79M9.10 2.52H12.56M9.64 0.34V3.32M9.38 3.87L10.65 1.94" fill="none" stroke="#555" stroke-width="0.77"/></svg>
<svg style="position:absolute;left:565.0px;top:45.8px;opacity:0.67" width="22.00" height="4.3"><path d="M0.51 1.68H2.97M1.12 0.77H3.64M2.81 0.34V3.28M0.72 3.87L2.02 1.94M5.81 1.24H7.93M5.73 2.64H8.18M5.18 2.79H7.61M5.60 0.34V3.25M5.12 3.87L6.42 1.94M9.85 3.13H12.06M9.26 0.95H12.58M10.47 0.34V3.51M9.52 3.87L10.82 1.94M13.84 0.71H16.45M13.96 2.80H16.49M14.11 3.55H17.08M16.15 0.34V3.25M13.92 3.87L15.22 1.94M18.73 1.69H21.14M18.91 1.30H20.64M18.95 0.34V3.23M19.03 0.34V3.88M18.32 3.87L19.62 1.94" fill="none" stroke="#555" stroke-width="0.77"/></svg>
<svg style="position:absolute;left:601.5px;top:45.8px;opacity:0.67" width="9.00" height="4.3"><path d="M0.92 0.66H3.56M0.57 3.04H3.57M3.46 0.34V3.67M2.46 0.34V3.36M0.74 3.87L2.06 1.94M5.12 3.47H7.69M5.73 3.47H8.06M7.09 0.34V3.53M5.24 3.87L6.56 1.94" fill="none" stroke="#555" stroke-width="0.77"/></svg>
<svg style="position:absolute;left:626.0px;top:45.8px;opacity:0.67" width="18.00" height="4.3"><path d="M1.37 3.44H3.85M1.09 1.92H3.43M0.85 1.56H3.62M1.93 0.34V3.99M0.74 3.87L2.06 1.94M5.00 3.49H8.18M5.55 2.72H7.54M6.81 0.34V3.97M6.62 0.34V3.70M5.24 3.87L6.56 1.94M9.86 1.16H12.88M9.50 2.39H12.53M9.63 3.31H12.22M11.92 0.34V3.94M11.56 0.34V3.85M9.74 3.87L11.06 1.94M14.54 2.82H16.90M14.94 1.36H16.80M14.86 0.34V3.79M14.24 3.87L15.56 1.94" fill="none" stroke="#555" stroke-width="0.77"/></svg>
<svg style="position:absolute;left:661.5px;top:45.8px;opacity:0.67" width="9.00" height="4.3"><path d="M1.48 1.80H3.91M0.85 2.85H3.23M1.67 0.34V3.99M0.74 3.87L2.06 1.94M5.31 0.75H8.40M5.43 2.73H8.22M5.02 2.04H8.19M5.44 0.34V3.43M7.68 0.34V3.83M5.24 3.87L6.56 1.94" fill="none" stroke="#555" stroke-width="0.77"/></svg>
<div class="a" style="left:399.5px;top:45.2px;font-size:4.8px;color:#666;white-space:nowrap;">1</div>
<div class="a" style="left:429.5px;top:45.2px;font-size:4.8px;color:#666;white-space:nowrap;">2</div>
<div class="a" style="left:459.5px;top:45.2px;font-size:4.8px;color:#666;white-space:nowrap;">5</div>
<div class="a" style="left:489.5px;top:45.2px;font-size:4.8px;color:#666;white-space:nowrap;">6</div>
<svg class="a" style="left:332px;top:46px" width="4" height="4"><path d="M0.5 2 l1 1.3 l2 -2.6" fill="none" stroke="#777" stroke-width="0.6"/></svg>
<svg class="a" style="left:361px;top:46px" width="4" height="4"><path d="M0.5 2 l1 1.3 l2 -2.6" fill="none" stroke="#777" stroke-width="0.6"/></svg>
<svg class="a" style="left:695px;top:26px" width="65" height="41" viewBox="695 26 65 41"><circle cx="701" cy="32.5" r="1.8" fill="none" stroke="#2a63b8" stroke-width="0.7"/><path d="M699.8 33.8 l-1.8 1.8" stroke="#2a63b8" stroke-width="0.8"/><path d="M701.5 41 h4 v4 h-4z" fill="none" stroke="#555" stroke-width="0.5"/><path d="M702.5 42 l3 3" stroke="#2a63b8" stroke-width="0.6"/><path d="M702.5 48.5 v6 l1.5 -1.5 l1.5 2.5" fill="none" stroke="#666" stroke-width="0.6"/><circle cx="746.5" cy="35" r="1.6" fill="#f39c25"/></svg>
<svg class="a" style="left:790px;top:60px" width="8" height="5"><path d="M1.5 4 l2.5 -2.5 l2.5 2.5" fill="none" stroke="#555" stroke-width="0.7"/></svg>
<div class="a" style="left:232px;top:73px;width:329px;height:377px;background:#fff"></div>
<svg class="a" style="left:270px;top:100px" width="255" height="16"><path d="M11.3 3.3 V13.3 H1.3 M242.4 3.3 V13.3 H251" fill="none" stroke="#bdbdbd" stroke-width="0.9"/></svg>
<div class="doc" style="top:114.20px;display:flex;justify-content:space-between;width:248.39px"><span>Tiny</span><span>Pasture</span><span>is</span><span>your</span><span>charming</span><span>little</span><span>farm</span><span>simulator</span><span>that</span><span>cozies</span><span>up</span><span>at</span><span>the</span><span>bottom</span><span>of</span><span>your</span><span>screen,</span></div>
<div class="doc" style="top:122.85px;display:flex;justify-content:space-between;width:248.39px"><span>keeping</span><span>you</span><span>company</span><span>while</span><span>you</span><span>work</span><span>or</span><span>study.</span><span>In</span><span>this</span><span>game,</span><span>you</span><span>can</span><span>buy</span><span>adorable</span><span>baby</span></div>
<div class="doc" style="top:131.50px;display:flex;justify-content:space-between;width:248.39px"><span>animals,</span><span>grow</span><span>them,</span><span>and</span><span>collect</span><span>coins</span><span>dropped</span><span>from</span><span>them</span><span>once</span><span>they&#8217;re</span><span>all</span><span>grown</span><span>up</span><span>to</span><span>rake</span></div>
<div class="doc" style="top:140.15px;display:flex;justify-content:space-between;width:248.39px"><span>in</span><span>some</span><span>sweet</span><span>profits</span><span>and</span><span>expand</span><span>your</span><span>pasture.</span><span>When</span><span>you</span><span>improve</span><span>yourself</span><span>and</span><span>have</span><span>fun,</span></div>
<div class="doc" style="top:148.80px">your little critters will grow with you.</div>
<div class="doc b" style="top:166.10px"><span class="u">[h2]Unlock</span> New Species[/h2]</div>
<div class="doc" style="top:174.75px;display:flex;justify-content:space-between;width:248.39px"><span>Rabbits,</span><span>foxes,</span><span>alpacas,</span><span>birds...</span><span>even</span><span>slimes</span><span>and</span><span>zombies?</span><span>Yup!</span><span>You</span><span>can</span><span>build</span><span>multiple</span><span>pastures</span></div>
<div class="doc" style="top:183.40px">and place these animals separately. Before long, you&#8217;ll have your very own animal army!</div>
<div class="doc" style="top:192.05px"><span class="w">[img]</span>{STEAM_APP_<span class="u2">IMAGE}/extras/gif_1.gif</span>/<span class="w">img</span>]</div>
<div class="doc b" style="top:209.35px"><span class="u">[h2]Get</span> Interactive with Your Animals[/h2]</div>
<div class="doc" style="top:218.00px;display:flex;justify-content:space-between;width:248.39px"><span>Interacting</span><span>with</span><span>your</span><span>animals</span><span>more</span><span>often</span><span>will</span><span>make</span><span>them</span><span>grow</span><span>faster</span><span>and</span><span>drop</span><span>more</span><span>goodies</span></div>
<div class="doc" style="top:226.65px">for you!</div>
<div class="doc" style="top:235.30px"><span class="w">[img]</span>{STEAM_APP_<span class="u2">IMAGE}/extras/gif_4.gif</span>/<span class="w">img</span>]</div>
<div class="doc b" style="top:252.60px"><span class="u">[h2]Raise</span> a New Life[/h2]</div>
<div class="doc" style="top:261.25px;display:flex;justify-content:space-between;width:248.39px"><span>Feed</span><span>two</span><span>small</span><span>animals</span><span>of</span><span>the</span><span>same</span><span>species</span><span>with</span><span>special</span><span>props;</span><span>after</span><span>a</span><span>while,</span><span>they</span><span>will</span><span>breed</span></div>
<div class="doc" style="top:269.90px">new life!</div>
<div class="doc" style="top:278.55px"><span class="w">[img]</span>{STEAM_APP_<span class="u2">IMAGE}/extras/gif_2.gif</span>/<span class="w">img</span>]</div>
<div class="doc b" style="top:295.85px"><span class="u">[h2]Magic</span> Pasture[/h2]</div>
<div class="doc" style="top:304.50px">Purchase and deploy magical facilities to help you keep your animals clean and healthy!</div>
<div class="doc b" style="top:321.80px"><span class="u">[h2]Other</span> features[/h2]</div>
<div class="doc" style="top:330.45px">The vertical and horizontal ratio of the game on your computer screen can be adjusted.</div>
<div class="doc" style="top:339.10px">You can place the animals in the bottom left or bottom right corner of the screen.</div>
<div class="doc" style="top:356.40px"><span style="display:inline-block;width:7px"></span>Game FAQ</div>
<div class="doc" style="top:365.05px">Q: I usually hide the taskbar, but I can&#8217;t call it again after running the game.</div>
<div class="doc" style="top:373.70px;display:flex;justify-content:space-between;width:248.39px"><span>A:</span><span>After</span><span>running</span><span>the</span><span>game,</span><span>you</span><span>can</span><span>press</span><span>the</span><span>WIN</span><span>button</span><span>on</span><span>the</span><span>keyboard</span><span>to</span><span>call</span><span>out</span><span>the</span></div>
<div class="doc" style="top:382.35px">taskbar normally again.</div>
<div class="doc" style="top:399.65px">Q: How do I set the game so that it is not displayed on top?</div>
<svg class="a" style="left:281px;top:355px" width="8" height="8"><path d="M1 7 L6.5 1.5" stroke="#3d6fc2" stroke-width="1.4" stroke-linecap="round"/><path d="M1 7 l1 -2.2" stroke="#333" stroke-width="0.6"/></svg>
<div class="doc" style="left:381px;top:408.4px">as, th</div>
<svg class="a" style="left:0;top:380px" width="800" height="70" viewBox="0 380 800 70"><defs><clipPath id="ctr"><path d="M16.00 0.00 L21.65 11.50 L18.35 12.10 L25.62 22.00 L22.32 22.60 L29.40 32.00 L26.10 32.60 L31.80 41.00 L0.20 41.00 L5.90 32.60 L2.60 32.00 L9.68 22.60 L6.38 22.00 L13.65 12.10 L10.35 11.50Z"/></clipPath><g id="tr"><path d="M16.00 0.00 L21.65 11.50 L18.35 12.10 L25.62 22.00 L22.32 22.60 L29.40 32.00 L26.10 32.60 L31.80 41.00 L0.20 41.00 L5.90 32.60 L2.60 32.00 L9.68 22.60 L6.38 22.00 L13.65 12.10 L10.35 11.50Z" fill="#86cf56"/><g clip-path="url(#ctr)"><rect x="0" y="7.3" width="32" height="4.2" fill="#6abd4b"/><rect x="0" y="17.8" width="32" height="4.2" fill="#6abd4b"/><rect x="0" y="27.8" width="32" height="4.2" fill="#6abd4b"/><rect x="0" y="36.8" width="32" height="4.2" fill="#6abd4b"/><circle cx="12.15" cy="11.20" r="1.9" fill="#6abd4b"/><circle cx="15.75" cy="11.20" r="1.9" fill="#6abd4b"/><circle cx="19.35" cy="11.20" r="1.9" fill="#3f9e86"/><path d="M9.65 12.30 Q13.83 13.70 16 12.30 Q18.17 13.70 22.35 12.30" fill="none" stroke="#2f7a3a" stroke-width="0.8"/><path d="M16 13.10 L12.96 17.50 Q15.13 16.00 17.30 16.50Z" fill="#98da64"/><circle cx="8.18" cy="21.70" r="1.9" fill="#6abd4b"/><circle cx="11.78" cy="21.70" r="1.9" fill="#6abd4b"/><circle cx="15.38" cy="21.70" r="1.9" fill="#6abd4b"/><circle cx="18.98" cy="21.70" r="1.9" fill="#3f9e86"/><circle cx="22.58" cy="21.70" r="1.9" fill="#3f9e86"/><circle cx="26.18" cy="21.70" r="1.9" fill="#3f9e86"/><path d="M5.68 22.80 Q11.84 24.20 16 22.80 Q20.16 24.20 26.32 22.80" fill="none" stroke="#2f7a3a" stroke-width="0.8"/><path d="M16 23.60 L10.18 28.00 Q14.34 26.50 18.50 27.00Z" fill="#98da64"/><circle cx="4.40" cy="31.70" r="1.9" fill="#6abd4b"/><circle cx="8.00" cy="31.70" r="1.9" fill="#6abd4b"/><circle cx="11.60" cy="31.70" r="1.9" fill="#6abd4b"/><circle cx="15.20" cy="31.70" r="1.9" fill="#6abd4b"/><circle cx="18.80" cy="31.70" r="1.9" fill="#3f9e86"/><circle cx="22.40" cy="31.70" r="1.9" fill="#3f9e86"/><circle cx="26.00" cy="31.70" r="1.9" fill="#3f9e86"/><circle cx="29.60" cy="31.70" r="1.9" fill="#3f9e86"/><path d="M1.90 32.80 Q9.95 34.20 16 32.80 Q22.05 34.20 30.10 32.80" fill="none" stroke="#2f7a3a" stroke-width="0.8"/><path d="M16 33.60 L7.53 38.00 Q13.58 36.50 19.63 37.00Z" fill="#98da64"/><circle cx="1.00" cy="40.70" r="1.9" fill="#6abd4b"/><circle cx="4.60" cy="40.70" r="1.9" fill="#6abd4b"/><circle cx="8.20" cy="40.70" r="1.9" fill="#6abd4b"/><circle cx="11.80" cy="40.70" r="1.9" fill="#6abd4b"/><circle cx="15.40" cy="40.70" r="1.9" fill="#6abd4b"/><circle cx="19.00" cy="40.70" r="1.9" fill="#3f9e86"/><circle cx="22.60" cy="40.70" r="1.9" fill="#3f9e86"/><circle cx="26.20" cy="40.70" r="1.9" fill="#3f9e86"/><circle cx="29.80" cy="40.70" r="1.9" fill="#3f9e86"/><circle cx="33.40" cy="40.70" r="1.9" fill="#3f9e86"/><path d="M16 1.6 L11.00 8 Q14 6.5 18.00 7Z" fill="#98da64"/></g><path d="M16.00 0.00 L21.65 11.50 L18.35 12.10 L25.62 22.00 L22.32 22.60 L29.40 32.00 L26.10 32.60 L31.80 41.00 L0.20 41.00 L5.90 32.60 L2.60 32.00 L9.68 22.60 L6.38 22.00 L13.65 12.10 L10.35 11.50Z" fill="none" stroke="#2f7a3a" stroke-width="0.9" stroke-linejoin="round"/><rect x="14.5" y="40.5" width="3" height="1.5" fill="#c0602a"/></g><clipPath id="ctt"><path d="M16.00 0.00 L21.65 11.50 L18.35 12.10 L25.62 22.00 L22.32 22.60 L29.40 32.00 L26.10 32.60 L31.80 41.00 L0.20 41.00 L5.90 32.60 L2.60 32.00 L9.68 22.60 L6.38 22.00 L13.65 12.10 L10.35 11.50Z"/></clipPath><g id="tt"><path d="M16.00 0.00 L21.65 11.50 L18.35 12.10 L25.62 22.00 L22.32 22.60 L29.40 32.00 L26.10 32.60 L31.80 41.00 L0.20 41.00 L5.90 32.60 L2.60 32.00 L9.68 22.60 L6.38 22.00 L13.65 12.10 L10.35 11.50Z" fill="#4fae8e"/><g clip-path="url(#ctt)"><rect x="0" y="7.3" width="32" height="4.2" fill="#3f9a80"/><rect x="0" y="17.8" width="32" height="4.2" fill="#3f9a80"/><rect x="0" y="27.8" width="32" height="4.2" fill="#3f9a80"/><rect x="0" y="36.8" width="32" height="4.2" fill="#3f9a80"/><circle cx="12.15" cy="11.20" r="1.9" fill="#3f9a80"/><circle cx="15.75" cy="11.20" r="1.9" fill="#3f9a80"/><circle cx="19.35" cy="11.20" r="1.9" fill="#2f8575"/><path d="M9.65 12.30 Q13.83 13.70 16 12.30 Q18.17 13.70 22.35 12.30" fill="none" stroke="#256b4f" stroke-width="0.8"/><path d="M16 13.10 L12.96 17.50 Q15.13 16.00 17.30 16.50Z" fill="#5cb898"/><circle cx="8.18" cy="21.70" r="1.9" fill="#3f9a80"/><circle cx="11.78" cy="21.70" r="1.9" fill="#3f9a80"/><circle cx="15.38" cy="21.70" r="1.9" fill="#3f9a80"/><circle cx="18.98" cy="21.70" r="1.9" fill="#2f8575"/><circle cx="22.58" cy="21.70" r="1.9" fill="#2f8575"/><circle cx="26.18" cy="21.70" r="1.9" fill="#2f8575"/><path d="M5.68 22.80 Q11.84 24.20 16 22.80 Q20.16 24.20 26.32 22.80" fill="none" stroke="#256b4f" stroke-width="0.8"/><path d="M16 23.60 L10.18 28.00 Q14.34 26.50 18.50 27.00Z" fill="#5cb898"/><circle cx="4.40" cy="31.70" r="1.9" fill="#3f9a80"/><circle cx="8.00" cy="31.70" r="1.9" fill="#3f9a80"/><circle cx="11.60" cy="31.70" r="1.9" fill="#3f9a80"/><circle cx="15.20" cy="31.70" r="1.9" fill="#3f9a80"/><circle cx="18.80" cy="31.70" r="1.9" fill="#2f8575"/><circle cx="22.40" cy="31.70" r="1.9" fill="#2f8575"/><circle cx="26.00" cy="31.70" r="1.9" fill="#2f8575"/><circle cx="29.60" cy="31.70" r="1.9" fill="#2f8575"/><path d="M1.90 32.80 Q9.95 34.20 16 32.80 Q22.05 34.20 30.10 32.80" fill="none" stroke="#256b4f" stroke-width="0.8"/><path d="M16 33.60 L7.53 38.00 Q13.58 36.50 19.63 37.00Z" fill="#5cb898"/><circle cx="1.00" cy="40.70" r="1.9" fill="#3f9a80"/><circle cx="4.60" cy="40.70" r="1.9" fill="#3f9a80"/><circle cx="8.20" cy="40.70" r="1.9" fill="#3f9a80"/><circle cx="11.80" cy="40.70" r="1.9" fill="#3f9a80"/><circle cx="15.40" cy="40.70" r="1.9" fill="#3f9a80"/><circle cx="19.00" cy="40.70" r="1.9" fill="#2f8575"/><circle cx="22.60" cy="40.70" r="1.9" fill="#2f8575"/><circle cx="26.20" cy="40.70" r="1.9" fill="#2f8575"/><circle cx="29.80" cy="40.70" r="1.9" fill="#2f8575"/><circle cx="33.40" cy="40.70" r="1.9" fill="#2f8575"/><path d="M16 1.6 L11.00 8 Q14 6.5 18.00 7Z" fill="#5cb898"/></g><path d="M16.00 0.00 L21.65 11.50 L18.35 12.10 L25.62 22.00 L22.32 22.60 L29.40 32.00 L26.10 32.60 L31.80 41.00 L0.20 41.00 L5.90 32.60 L2.60 32.00 L9.68 22.60 L6.38 22.00 L13.65 12.10 L10.35 11.50Z" fill="none" stroke="#256b4f" stroke-width="0.9" stroke-linejoin="round"/><rect x="14.5" y="40.5" width="3" height="1.5" fill="#c0602a"/></g><linearGradient id="gnd" x1="0" x2="1" y1="0" y2="0"><stop offset="0" stop-color="#d7efd6"/><stop offset="0.3" stop-color="#dff2c9"/><stop offset="0.5" stop-color="#e4f3c3"/><stop offset="0.75" stop-color="#dcf1cb"/><stop offset="1" stop-color="#d8eed8"/></linearGradient></defs><ellipse cx="334" cy="407" rx="11" ry="14" fill="#c8eee6"/><ellipse cx="22" cy="410" rx="10" ry="12" fill="#c8eee6"/><ellipse cx="38" cy="404" rx="10" ry="10" fill="#c8eee6"/><ellipse cx="58" cy="406" rx="12" ry="10" fill="#c8eee6"/><ellipse cx="90" cy="408" rx="12" ry="10" fill="#c8eee6"/><ellipse cx="125" cy="408" rx="12" ry="10" fill="#c8eee6"/><ellipse cx="150" cy="405" rx="12" ry="10" fill="#c8eee6"/><ellipse cx="178" cy="404" rx="12" ry="10" fill="#c8eee6"/><ellipse cx="208" cy="402" rx="14" ry="10" fill="#c8eee6"/><ellipse cx="240" cy="404" rx="14" ry="12" fill="#c8eee6"/><ellipse cx="262" cy="406" rx="12" ry="10" fill="#c8eee6"/><ellipse cx="290" cy="410" rx="10" ry="10" fill="#c8eee6"/><ellipse cx="318" cy="412" rx="10" ry="10" fill="#c8eee6"/><ellipse cx="405" cy="418" rx="12" ry="8" fill="#c8eee6"/><ellipse cx="430" cy="412" rx="10" ry="8" fill="#c8eee6"/><ellipse cx="470" cy="410" rx="10" ry="8" fill="#c8eee6"/><ellipse cx="505" cy="404" rx="12" ry="10" fill="#c8eee6"/><ellipse cx="520" cy="402" rx="14" ry="12" fill="#c8eee6"/><ellipse cx="545" cy="404" rx="10" ry="9" fill="#c8eee6"/><ellipse cx="565" cy="406" rx="12" ry="8" fill="#c8eee6"/><ellipse cx="600" cy="406" rx="12" ry="8" fill="#c8eee6"/><ellipse cx="636" cy="404" rx="12" ry="10" fill="#c8eee6"/><ellipse cx="665" cy="406" rx="14" ry="10" fill="#c8eee6"/><ellipse cx="700" cy="410" rx="12" ry="8" fill="#c8eee6"/><ellipse cx="740" cy="410" rx="10" ry="8" fill="#c8eee6"/><rect x="0" y="414" width="800" height="16" fill="#c8eee6"/><path d="M617 430 L626 406 L635 430Z" fill="#7eb5c7"/><path d="M342 430 L352 412 L362 430Z" fill="#7eb5c7"/><path d="M358 430 L370 405 L382 430Z" fill="#7eb5c7"/><path d="M382 430 L393 411 L404 430Z" fill="#7eb5c7"/><path d="M16 430 L26 415 L36 430Z" fill="#7eb5c7"/><path d="M150 430 L160 412 L170 430Z" fill="#7eb5c7"/><path d="M252 430 L262 418 L272 430Z" fill="#7eb5c7"/><path d="M452 430 L462 418 L472 430Z" fill="#7eb5c7"/><path d="M564 430 L575 413 L586 430Z" fill="#7eb5c7"/><path d="M596 430 L606 416 L616 430Z" fill="#7eb5c7"/><path d="M690 430 L700 416 L710 430Z" fill="#7eb5c7"/><use href="#tr" transform="translate(-9.48 392.00) scale(0.905)"/><use href="#tr" transform="translate(36.50 388.00) scale(1.000)"/><use href="#tr" transform="translate(66.86 406.00) scale(0.571)"/><use href="#tt" transform="translate(132.50 388.00) scale(1.000)"/><use href="#tr" transform="translate(171.00 388.00) scale(1.000)"/><use href="#tr" transform="translate(209.86 406.00) scale(0.571)"/><use href="#tr" transform="translate(222.67 395.00) scale(0.833)"/><use href="#tr" transform="translate(263.36 406.00) scale(0.571)"/><use href="#tt" transform="translate(306.00 388.00) scale(1.000)"/><use href="#tr" transform="translate(283.00 388.00) scale(1.000)"/><use href="#tr" transform="translate(300.67 395.00) scale(0.833)"/><use href="#tr" transform="translate(351.24 407.00) scale(0.548)"/><use href="#tr" transform="translate(405.86 406.00) scale(0.571)"/><use href="#tt" transform="translate(489.17 395.00) scale(0.833)"/><use href="#tr" transform="translate(421.00 388.00) scale(1.000)"/><use href="#tr" transform="translate(437.67 395.00) scale(0.833)"/><use href="#tr" transform="translate(460.86 406.00) scale(0.571)"/><use href="#tr" transform="translate(477.67 395.00) scale(0.833)"/><use href="#tr" transform="translate(502.98 405.00) scale(0.595)"/><use href="#tt" transform="translate(536.48 405.00) scale(0.595)"/><use href="#tr" transform="translate(545.67 395.00) scale(0.833)"/><use href="#tr" transform="translate(580.67 395.00) scale(0.833)"/><use href="#tr" transform="translate(594.00 388.00) scale(1.000)"/><use href="#tr" transform="translate(627.67 395.00) scale(0.833)"/><use href="#tr" transform="translate(658.48 405.00) scale(0.595)"/><use href="#tr" transform="translate(688.00 388.00) scale(1.000)"/><use href="#tr" transform="translate(720.10 404.00) scale(0.619)"/><rect x="0" y="388.5" width="12.5" height="2" fill="#7a4124"/><rect x="8.5" y="390" width="1.5" height="5" fill="#7a4124"/><path d="M5 395.5 H13.5 L17.5 401.5 H1.5Z" fill="#d9854c" stroke="#8a4625" stroke-width="0.7"/><rect x="5" y="401.5" width="8" height="2" fill="#f7c66f"/><rect x="60.5" y="392" width="2.2" height="37" fill="#8a4a25"/><path d="M58 412 H65 L68 423 Q61.5 426 55 423Z" fill="#d98c4a" stroke="#8a4625" stroke-width="0.7"/><path d="M63 394 Q70 390 74 396 Q77 402 74 412 Q72 424 74 430" fill="none" stroke="#5aa83e" stroke-width="2"/><path d="M74 396 q4 -3 5 1" fill="none" stroke="#5aa83e" stroke-width="1.2"/><path d="M68 410 q-3 -3 0 -4" fill="none" stroke="#5aa83e" stroke-width="1.2"/><path d="M89 430 Q92 418 90 406 Q89 398 96 396 L104 398 L110 410 Q112 422 116 430Z" fill="#a8652f" stroke="#5c3318" stroke-width="0.8"/><path d="M92 402 Q95 399 98 401 L97 406 Q94 407 92 405Z" fill="#3d2616"/><path d="M99 430 Q101 420 100 410" fill="none" stroke="#7a4320" stroke-width="0.8"/><path d="M106 430 Q106 420 104 412" fill="none" stroke="#7a4320" stroke-width="0.8"/><path d="M100 401 L104 392.5 L117 392 L124.5 401.5 L121 404 L104 404Z" fill="#b9552b" stroke="#5c3318" stroke-width="0.8"/><path d="M113 401 L118.5 395.5 L123.5 401 V411 H113Z" fill="#d88a58" stroke="#6a3a1e" stroke-width="0.6"/><rect x="115.5" y="403" width="4" height="4" fill="#9a5a30"/><path d="M101 396 q3 3 6 1 q2 3 5 1 M108 404 q-1 6 1 12 M119.5 411 v12 M112 405 q2 4 0 8" fill="none" stroke="#5da63f" stroke-width="1.1"/><path d="M139 430 Q146 426 150 418 Q154 410 158 402 Q162 395 166 391 L171 393 Q166 400 165 410 Q164 420 167 430Z" fill="#9d5a2c" stroke="#5c3318" stroke-width="0.8"/><path d="M157 404 Q150 400 141 404" fill="none" stroke="#5c3318" stroke-width="3.2"/><path d="M157 404 Q150 400 141 404" fill="none" stroke="#9d5a2c" stroke-width="2"/><path d="M152 420 Q155 412 160 406 M147 428 Q153 424 156 416" fill="none" stroke="#6f3d1e" stroke-width="0.7"/><ellipse cx="146.5" cy="411.5" rx="5.8" ry="6.3" fill="#f1b54a" stroke="#8a5a20" stroke-width="0.7"/><ellipse cx="146.5" cy="411.5" rx="1.8" ry="1.8" fill="#4a2e18"/><circle cx="167" cy="391" r="2.4" fill="#6cc04a" stroke="#3a8a3e" stroke-width="0.5"/><circle cx="171" cy="396" r="2.6" fill="#6cc04a" stroke="#3a8a3e" stroke-width="0.5"/><circle cx="173" cy="403" r="2.4" fill="#6cc04a" stroke="#3a8a3e" stroke-width="0.5"/><circle cx="164" cy="395" r="2" fill="#6cc04a" stroke="#3a8a3e" stroke-width="0.5"/><circle cx="171" cy="409" r="2.2" fill="#6cc04a" stroke="#3a8a3e" stroke-width="0.5"/><circle cx="175" cy="399" r="2" fill="#6cc04a" stroke="#3a8a3e" stroke-width="0.5"/><circle cx="175" cy="413" r="2" fill="#6cc04a" stroke="#3a8a3e" stroke-width="0.5"/><circle cx="160" cy="399" r="1.8" fill="#6cc04a" stroke="#3a8a3e" stroke-width="0.5"/><circle cx="177" cy="393" r="1.6" fill="#6cc04a" stroke="#3a8a3e" stroke-width="0.5"/><ellipse cx="203" cy="421" rx="9.5" ry="9" fill="#262626"/><path d="M203 412 Q212 414 211 424 Q209 429 205 428 Q209 420 203 412Z" fill="#f3ead8"/><circle cx="185.5" cy="412.5" r="2.8" fill="#262626"/><ellipse cx="193.5" cy="419.5" rx="10.5" ry="8.3" fill="#f3ead8" stroke="#262626" stroke-width="0.9"/><ellipse cx="188" cy="419.8" rx="1.8" ry="2.2" fill="#262626"/><ellipse cx="196.5" cy="419.8" rx="1.9" ry="2.2" fill="#262626"/><ellipse cx="191.6" cy="423" rx="0.9" ry="0.6" fill="#c99a8a"/><rect x="185" y="427.5" width="26" height="2.5" fill="#262626"/><path d="M197 401.5 h5 l-2.5 2.5z" fill="#e8a040" stroke="#6a4a20" stroke-width="0.5"/><path d="M316 421 Q318 416 326 415 Q332 416 337 419 L341 424.5 L338 425.5 L334 423 Q330 426 324 428 L320 430 L317 428 Q314 425 316 421Z" fill="#eecdad" stroke="#6e5038" stroke-width="0.8"/><ellipse cx="331" cy="413.5" rx="4.8" ry="4.3" fill="#eecdad" stroke="#6e5038" stroke-width="0.8"/><path d="M327 410.5 L324.5 404 Q328 405 330.5 409.5Z M332 409.5 L331 404.5 Q334.5 406 334.5 410.5Z" fill="#eecdad" stroke="#6e5038" stroke-width="0.7"/><circle cx="332.5" cy="413" r="0.7" fill="#3a2a20"/><path d="M349.5 409 Q354 404 358 405 Q362 404 366.5 409 L362 410.5 H353.5Z" fill="#4a72c8" stroke="#23346a" stroke-width="0.6"/><ellipse cx="358" cy="405" rx="3" ry="3.2" fill="#f2f2f4" stroke="#444" stroke-width="0.5"/><path d="M354.5 402 L356 400.5 L358 402" fill="none" stroke="#333" stroke-width="0.6"/><path d="M493 425.5 Q492.5 419.5 499 419.5 L514 420.5 L515 430 H498 Q493 429.5 493 425.5Z" fill="#cc5a30" stroke="#5a2412" stroke-width="0.8"/><path d="M498.5 420 q1 5 0 10 M503.5 420.2 q1 5 0 9.8 M508.5 420.4 q1 5 0 9.6" fill="none" stroke="#f0a878" stroke-width="0.8"/><path d="M512 430 Q511 420 518 419 L526 419 L528 430Z" fill="#b94c26" stroke="#5a2412" stroke-width="0.8"/><ellipse cx="529.5" cy="419.5" rx="7.8" ry="7.3" fill="#cc5a30" stroke="#5a2412" stroke-width="0.8"/><path d="M520.5 415 L519.5 409 L525 412Z M534 412 L539 409 L538.5 415Z" fill="#f5e6da" stroke="#5a2412" stroke-width="0.7"/><path d="M524 421.5 Q526 418 529 420.5 Q532 418 536 421 Q535 426 529.5 426 Q525 426 524 421.5Z" fill="#f5e6da"/><circle cx="527" cy="418.5" r="0.7" fill="#2a1a10"/><circle cx="532.5" cy="418.5" r="0.7" fill="#2a1a10"/><path d="M598 414.5 Q597 412 599.5 412.5 L603 414 H612 L613 408 L609 406.5 L606.5 402.5 L611 404.5 Q615 401.5 620 402 L622.5 400.5 L624.5 404 Q624 407 622 409.5 Q620 411.5 618 411.5 L618 418 Q618 421 616.5 424 L617.5 430 H615.5 L614 425 L611.5 430 H609.5 L610 424 H604.5 L604 430 H602 L601.5 425 L600 430 H598.5 L599 423 Q597 419 598 414.5Z" fill="#f1c29a" stroke="#6e4226" stroke-width="0.8"/><path d="M613 410 Q615 414 618 413 L617.5 418 Q614 417 613 413Z" fill="#faeee2"/><path d="M610 404 L606 396 L603.5 392.5 M607.5 398.5 L604 397.5 M608.5 400 L612 394.5 L611.5 391.5 M619.5 402 L619 396 L617.5 392.5 M619 397.5 L622.5 394 L623 391.5 M619.2 399.5 L622 399" fill="none" stroke="#6e4226" stroke-width="1.1"/><circle cx="619.5" cy="405.8" r="0.7" fill="#3a2a20"/><rect x="672" y="391.8" width="62" height="2.4" fill="#8d4f2c"/><rect x="674" y="394.2" width="58" height="1" fill="#9ccbd6"/><rect x="673.6" y="396.3" width="54" height="11.2" rx="1" fill="#d4864e" stroke="#6a3a1e" stroke-width="0.9"/><circle cx="679.5" cy="402" r="3" fill="#e89a3a" stroke="#7a4a1e" stroke-width="0.7"/><circle cx="679.8" cy="402" r="1.5" fill="#f3b552"/><path d="M678 421.5 L686 419.5 L690 417.5 L695 416 L695.5 409.5 L698.5 412.5 L701.5 412.5 L703.5 409 L704.5 414.5 Q705.5 419 702.5 422 L700 426 L702.5 428.5 L697 429 L694 425.5 L688 425 L685 428.5 L681 428.5 L684 424 L680 423.5Z" fill="#fafafa" stroke="#8e8e8e" stroke-width="0.7" stroke-linejoin="round"/><circle cx="700.5" cy="416.5" r="0.6" fill="#333"/><rect x="703.5" y="415" width="23.5" height="10" fill="#e2a85c" stroke="#6a3a1e" stroke-width="0.7"/><rect x="708.5" y="411" width="13.5" height="12" fill="#b9662f" stroke="#6a3a1e" stroke-width="0.7"/><path d="M711.5 416 Q715 412 719 416 L718 419 Q715 422 712.5 419Z" fill="#f0b556" stroke="#6a3a1e" stroke-width="0.5"/><rect x="703.5" y="424.5" width="23.5" height="5.5" fill="#ebc574" stroke="#6a3a1e" stroke-width="0.6"/><rect x="711" y="426.5" width="8" height="1.5" fill="#6a4a2a" opacity="0.7"/><rect x="731" y="392" width="3" height="38" fill="#7a4124"/><rect x="733" y="397" width="67" height="33" fill="#efd9b0" opacity="0"/><rect x="746" y="397.5" width="50" height="24" fill="#e4f2ee"/><use href="#tr" transform="translate(760 404) scale(0.62)"/><rect x="734" y="398" width="10" height="22" fill="#cfe8ea"/><path d="M730 400.5 L734 388.3 H796 L799.5 400.5Z" fill="#e08a48" stroke="#5a2f18" stroke-width="0.9"/><path d="M751 389 L756 389 L760 397 L755 397Z" fill="#6fa3dc"/><path d="M766 389 L771 389 L775 397 L770 397Z" fill="#6fa3dc"/><path d="M781 389 L786 389 L790 397 L785 397Z" fill="#6fa3dc"/><path d="M736 389 L741 397 M746 389 L751 397 M761 389 L766 397 M776 389 L781 397 M791 389 L796 397" stroke="#c86e35" stroke-width="0.6"/><rect x="730" y="390" width="16" height="8" fill="#7a4124"/><rect x="732" y="392" width="12" height="4" fill="#9a5a30"/><rect x="733" y="397.5" width="3" height="32.5" fill="#7a4124"/><rect x="743" y="397.5" width="3" height="32.5" fill="#7a4124"/><path d="M736 403 L743 410 L736 417" fill="none" stroke="#7a4124" stroke-width="1.5"/><rect x="733" y="419" width="67" height="11" fill="#8e4f2c"/><rect x="748.4" y="398.4" width="27.2" height="12.2" rx="1" fill="#c9763f" stroke="#5a2f18" stroke-width="0.8"/><rect x="780.5" y="398.4" width="11.2" height="12.2" rx="1" fill="#c9763f" stroke="#5a2f18" stroke-width="0.8"/><rect x="748" y="414" width="12" height="12.4" rx="1" fill="#c9763f" stroke="#5a2f18" stroke-width="0.8"/><rect x="764" y="414" width="12" height="12.4" rx="1" fill="#c9763f" stroke="#5a2f18" stroke-width="0.8"/><rect x="780" y="414" width="12" height="12.4" rx="1" fill="#c9763f" stroke="#5a2f18" stroke-width="0.8"/><g fill="none" stroke="#f5d2ae" stroke-width="0.8"><path d="M757 402 h2 l2 5 h8 l1.5 -4 h-10"/><circle cx="762" cy="408.5" r="0.7"/><circle cx="768" cy="408.5" r="0.7"/><path d="M751 421.5 l3 -3 l3 3 v3 h-6z"/><rect x="767" y="417.5" width="6" height="6"/><circle cx="786" cy="420.2" r="2.6"/><circle cx="786" cy="420.2" r="1"/></g><rect x="795" y="397.5" width="3" height="32.5" fill="#7a4124"/><rect x="0" y="430" width="800" height="20" fill="url(#gnd)"/></svg>
<div class="a" style="left:686.5px;top:397px;font-size:8.4px;line-height:10.08px;color:#6a3a20;white-space:nowrap;letter-spacing:0.12px">3,808,578</div>
<div class="a" style="left:363px;top:409.5px;width:16px;height:7px;background:#fff;border:0.6px solid #c8c8c8"></div>
<div class="a" style="left:365px;top:410.3px;font-size:4.2px;line-height:5.04px;color:#777;white-space:nowrap;">(Ctrl)</div>
<svg class="a" style="left:375.5px;top:412px" width="3" height="3"><path d="M0 0.5 h2.4 l-1.2 1.5z" fill="#777"/></svg>
<div class="a" style="left:785px;top:398.5px;font-size:9.5px;line-height:11.4px;color:#f6dcc0;white-space:nowrap;font-weight:bold">?</div>
<svg class="a" style="left:0;top:430px" width="800" height="20" viewBox="0 430 800 20"><g fill="#3d8fe0"><rect x="9.2" y="435.2" width="4.6" height="4.6"/><rect x="14.4" y="435.2" width="4.6" height="4.6"/><rect x="9.2" y="440.4" width="4.6" height="4.6"/><rect x="14.4" y="440.4" width="4.6" height="4.6"/></g><circle cx="31.5" cy="439.3" r="3" fill="none" stroke="#222" stroke-width="1.1"/><path d="M33.7 441.5 L36.5 444.3" stroke="#222" stroke-width="1.2"/><path d="M46.5 443 Q49 436 55 435.5 Q54 442 46.5 443Z" fill="#9cc2e0"/><path d="M48 444 Q51 439 55.5 439" fill="none" stroke="#c8dcea" stroke-width="1.2"/><circle cx="69" cy="440" r="5" fill="#e44134"/><path d="M69 440 L64.7 442.5 A5 5 0 0 0 73.3 442.5Z" fill="#34a853"/><path d="M69 440 L73.3 442.5 A5 5 0 0 0 69 435 Z" fill="#fbbc05"/><circle cx="69" cy="440" r="2.2" fill="#4a8af4" stroke="#fff" stroke-width="0.8"/><path d="M82 436 H87 L88 437 H93 V445 H82Z" fill="#f5c243"/><rect x="82" y="438.5" width="11" height="6.5" fill="#fbd35c"/><rect x="84" y="442" width="8" height="1.5" fill="#3f88d8"/><rect x="103" y="435" width="8" height="10" rx="1" fill="#2b6ec9"/><rect x="100" y="437" width="6" height="6" fill="#1d4f9e"/><text x="100.8" y="442.2" font-size="5" fill="#fff" font-family="Liberation Sans" font-weight="bold">W</text><circle cx="123" cy="440" r="5" fill="#1b3a66"/><circle cx="124.5" cy="438.8" r="1.6" fill="none" stroke="#fff" stroke-width="0.8"/><path d="M119 441 L123.5 439.5" stroke="#fff" stroke-width="0.8"/><rect x="135" y="432.5" width="13" height="13" rx="1.5" fill="#eef3e6"/><path d="M138 445 Q137 438 141 437 L140 433.5 L142 436.5 L144 433.5 L144 437 Q147 439 145 445Z" fill="#d8b89a"/><rect x="138.5" y="446.5" width="7" height="1" fill="#3f6fc0"/><rect x="68.5" y="447" width="1.2" height="0.8" fill="#888"/><rect x="105.0" y="447" width="1.2" height="0.8" fill="#888"/><rect x="122.5" y="447" width="1.2" height="0.8" fill="#888"/><path d="M692 441.5 L694.5 439 L697 441.5" fill="none" stroke="#555" stroke-width="0.6"/><rect x="706.2" y="436.5" width="2" height="4.5" rx="1" fill="none" stroke="#4a78b8" stroke-width="0.6"/><path d="M705 439.5 Q707.2 443.5 709.4 439.5 M707.2 442.3 v1.7" fill="none" stroke="#4a78b8" stroke-width="0.5"/><path d="M735.5 438.5 Q739 435.5 742.5 438.5 M736.7 440 Q739 438 741.3 440 M737.9 441.5 Q739 440.6 740.1 441.5" fill="none" stroke="#666" stroke-width="0.6"/><circle cx="739" cy="443" r="0.5" fill="#666"/><path d="M745 438.5 h1.5 l2 -2 v7 l-2 -2 h-1.5z" fill="none" stroke="#666" stroke-width="0.5"/><path d="M750 438 q1 2 0 4" fill="none" stroke="#666" stroke-width="0.5"/><rect x="788" y="425.5" width="12" height="8.5" rx="1" fill="#2e332e" opacity="0.85"/><path d="M792 429 l2 1.5 l2 -1.5" fill="none" stroke="#ddd" stroke-width="0.6"/><rect x="788" y="436.5" width="12" height="13.5" rx="1" fill="#262a26" opacity="0.9"/><circle cx="794" cy="443" r="3" fill="none" stroke="#e8e8e8" stroke-width="0.7"/><circle cx="794" cy="443" r="1" fill="none" stroke="#e8e8e8" stroke-width="0.5"/></svg>
<div class="a" style="left:718.5px;top:438px;font-size:4.8px;line-height:5.76px;color:#555;white-space:nowrap;">ENG</div>
<div class="a" style="left:770.5px;top:433.5px;font-size:5px;line-height:6.0px;color:#444;white-space:nowrap;">10:54</div>
<div class="a" style="left:760px;top:440.5px;font-size:5px;line-height:6.0px;color:#444;white-space:nowrap;">2025/2/14</div>
<svg class="a" style="left:0;top:0" width="800" height="450" viewBox="0 0 800 450"><path d="M552.7 136 V336 L556.5 341.3 H773.5 L779 337 V136 Z" fill="#c6673b"/><rect x="553.5" y="136" width="225" height="202" fill="#de7b4c"/><rect x="562" y="136" width="103.5" height="202" fill="#eda560"/><rect x="553.5" y="136" width="3" height="202" fill="#fad09a"/><rect x="556.5" y="136" width="1" height="202" fill="#c9703f"/><rect x="557.5" y="136" width="4.5" height="202" fill="#e89656"/><rect x="770" y="136" width="8" height="202" fill="#f0ad74"/><rect x="772" y="136" width="2" height="202" fill="#f8c793"/><rect x="769.5" y="136" width="0.8" height="202" fill="#c9703f"/><rect x="778" y="136" width="1" height="205" fill="#9c5530"/><rect x="552.5" y="136" width="1" height="201" fill="#9c5530"/><path d="M553 337.5 L556.5 341.3 H773.5 L779 337.5" fill="none" stroke="#9c5530" stroke-width="0.9"/><rect x="557" y="337.3" width="216" height="1.2" fill="#b85a33"/><line x1="594" y1="137" x2="594" y2="151" stroke="#d98c4c" stroke-width="0.8"/><line x1="617" y1="137" x2="617" y2="151" stroke="#d98c4c" stroke-width="0.8"/><line x1="641" y1="137" x2="641" y2="151" stroke="#d98c4c" stroke-width="0.8"/><line x1="620" y1="188" x2="620" y2="200" stroke="#d98c4c" stroke-width="0.8"/><line x1="596" y1="192" x2="596" y2="230" stroke="#d98c4c" stroke-width="0.8"/><line x1="619" y1="193" x2="619" y2="218" stroke="#d98c4c" stroke-width="0.8"/><line x1="583" y1="262" x2="583" y2="320" stroke="#d98c4c" stroke-width="0.8"/><line x1="600" y1="188" x2="600" y2="262" stroke="#e2994f" stroke-width="0.8"/><line x1="636" y1="188" x2="636" y2="262" stroke="#e09550" stroke-width="0.8"/><line x1="641" y1="280" x2="641" y2="315" stroke="#d98c4c" stroke-width="0.8"/><line x1="610" y1="280" x2="610" y2="340" stroke="#d98c4c" stroke-width="0.8"/><line x1="614" y1="320" x2="614" y2="338" stroke="#d98c4c" stroke-width="0.8"/><line x1="691" y1="137" x2="691" y2="146" stroke="#c96a3e" stroke-width="0.8"/><line x1="718" y1="137" x2="718" y2="146" stroke="#c96a3e" stroke-width="0.8"/><line x1="745" y1="137" x2="745" y2="146" stroke="#c96a3e" stroke-width="0.8"/><line x1="674" y1="190" x2="674" y2="316" stroke="#cf7045" stroke-width="0.8"/><line x1="692" y1="190" x2="692" y2="240" stroke="#cf7045" stroke-width="0.8"/><line x1="709" y1="190" x2="709" y2="246" stroke="#cf7045" stroke-width="0.8"/><line x1="737" y1="190" x2="737" y2="316" stroke="#cf7045" stroke-width="0.8"/><line x1="755" y1="190" x2="755" y2="252" stroke="#cf7045" stroke-width="0.8"/><line x1="724" y1="252" x2="724" y2="316" stroke="#cf7045" stroke-width="0.8"/><line x1="768" y1="140" x2="768" y2="338" stroke="#d0703f" stroke-width="0.8"/><rect x="762.3" y="143" width="3.4" height="73" fill="#f8d3a8"/><path d="M552.7 111 L561 107.3 H770.3 L779 111 V136 H552.7 Z" fill="#cd7e4e" stroke="#9c5530" stroke-width="0.9"/><path d="M553.2 111.3 L561.5 108 V135.6 H553.2 Z" fill="#bf6d40"/><path d="M770 108 L778.5 111.3 V135.6 H770 Z" fill="#bf6d40"/><line x1="552.7" y1="135.8" x2="779" y2="135.8" stroke="#a0522c" stroke-width="1.2" stroke-dasharray="1 0.6"/><rect x="565.5" y="111.10000000000001" width="1.3" height="1.3" fill="#6d3f25"/><rect x="764.5" y="111.10000000000001" width="1.3" height="1.3" fill="#6d3f25"/><rect x="565.5" y="116.10000000000001" width="1.3" height="1.3" fill="#6d3f25"/><rect x="764.5" y="116.10000000000001" width="1.3" height="1.3" fill="#6d3f25"/><rect x="565.5" y="121.10000000000001" width="1.3" height="1.3" fill="#6d3f25"/><rect x="764.5" y="121.10000000000001" width="1.3" height="1.3" fill="#6d3f25"/><rect x="565.5" y="126.10000000000001" width="1.3" height="1.3" fill="#6d3f25"/><rect x="764.5" y="126.10000000000001" width="1.3" height="1.3" fill="#6d3f25"/><rect x="565.5" y="131.1" width="1.3" height="1.3" fill="#6d3f25"/><rect x="764.5" y="131.1" width="1.3" height="1.3" fill="#6d3f25"/><rect x="756.5" y="91.5" width="12" height="12" rx="1" fill="#e2683a" stroke="#b24f2a" stroke-width="0.7"/><path d="M759 94 L766 101 M766 94 L759 101" stroke="#f6c3a0" stroke-width="1"/><rect x="570.7" y="146.5" width="183.0" height="19.0" rx="4.5" fill="#d4683a" stroke="#9f4a28" stroke-width="0.9"/><rect x="570.7" y="170.5" width="183.0" height="18.5" rx="4.5" fill="#d4683a" stroke="#9f4a28" stroke-width="0.9"/><rect x="568" y="315" width="92" height="19.5" rx="4.5" fill="#d4683a" stroke="#9f4a28" stroke-width="0.9"/><rect x="671.6" y="315" width="92.39999999999998" height="19.5" rx="4.5" fill="#d4683a" stroke="#9f4a28" stroke-width="0.9"/><rect x="680" y="200.0" width="75.5" height="5.2" rx="2.6" fill="#c75a33" stroke="#a24b2a" stroke-width="0.7"/><rect x="681" y="201.0" width="56.5" height="3.2" rx="1.6" fill="#f3b46a"/><rect x="735.5" y="198.6" width="4.5" height="8" rx="1.5" fill="#fbd7ae" stroke="#a8572e" stroke-width="0.7"/><rect x="680" y="221.4" width="75.5" height="5.2" rx="2.6" fill="#c75a33" stroke="#a24b2a" stroke-width="0.7"/><rect x="681" y="222.4" width="2" height="3.2" rx="1.6" fill="#f3b46a"/><rect x="681" y="220" width="4.5" height="8" rx="1.5" fill="#fbd7ae" stroke="#a8572e" stroke-width="0.7"/><rect x="680" y="242.9" width="75.5" height="5.2" rx="2.6" fill="#c75a33" stroke="#a24b2a" stroke-width="0.7"/><rect x="681" y="243.9" width="60" height="3.2" rx="1.6" fill="#f3b46a"/><rect x="739" y="241.5" width="4.5" height="8" rx="1.5" fill="#fbd7ae" stroke="#a8572e" stroke-width="0.7"/><rect x="705" y="262" width="50" height="19.5" rx="2.5" fill="#fb8a1f"/><path d="M744 289.3 L740.5 293.3 L744 297.3 Z M748.8 289.3 L752.3 293.3 L748.8 297.3 Z" fill="#f7c48a" stroke="#a5552c" stroke-width="0.7"/><path d="M732 309 q3.5 -3 7 0 M741.5 309 q3.5 -3 7 0" fill="none" stroke="#9c5530" stroke-width="1"/><path d="M772 195 L781 203 L777 204 L779 209 L777.5 209.7 L775.5 204.8 L772 207.5 Z" fill="#e7e2e9" stroke="#6a6a78" stroke-width="0.6"/></svg>
<div class="a" style="left:606px;width:120px;text-align:center;top:114.5px;font-size:13px;line-height:15.6px;color:#7a4424;white-space:nowrap;font-weight:bold;">Settings</div>
<div class="a" style="left:602px;width:120px;text-align:center;top:152px;font-size:7.5px;line-height:9.0px;color:#8c4526;white-space:nowrap;font-weight:bold;">Bugs &amp; Feedback</div>
<div class="a" style="left:602px;width:120px;text-align:center;top:176px;font-size:7.5px;line-height:9.0px;color:#8c4526;white-space:nowrap;font-weight:bold;">Adjust game window</div>
<div class="a" style="left:554px;width:120px;text-align:center;top:321px;font-size:7.5px;line-height:9.0px;color:#8c4526;white-space:nowrap;font-weight:bold;">New Game</div>
<div class="a" style="left:658px;width:120px;text-align:center;top:321px;font-size:7.5px;line-height:9.0px;color:#8c4526;white-space:nowrap;font-weight:bold;">Exit Game</div>
<div class="a" style="left:670px;width:120px;text-align:center;top:268px;font-size:7.5px;line-height:9.0px;color:#8a4a24;white-space:nowrap;font-weight:bold;">English</div>
<div class="a" style="left:569px;top:201.5px;font-size:7.5px;line-height:9.0px;color:#7e4a2a;white-space:nowrap;font-weight:bold;">Master Volume</div>
<div class="a" style="left:569px;top:223px;font-size:7.5px;line-height:9.0px;color:#7e4a2a;white-space:nowrap;font-weight:bold;">Music</div>
<div class="a" style="left:569px;top:245px;font-size:7.5px;line-height:9.0px;color:#7e4a2a;white-space:nowrap;font-weight:bold;">Sound Effect</div>
<div class="a" style="left:569px;top:266.5px;font-size:7.5px;line-height:9.0px;color:#7e4a2a;white-space:nowrap;font-weight:bold;">Language</div>
<div class="a" style="left:569px;top:288px;font-size:7.5px;line-height:9.0px;color:#7e4a2a;white-space:nowrap;font-weight:bold;">Switch screen</div>
</body></html>
